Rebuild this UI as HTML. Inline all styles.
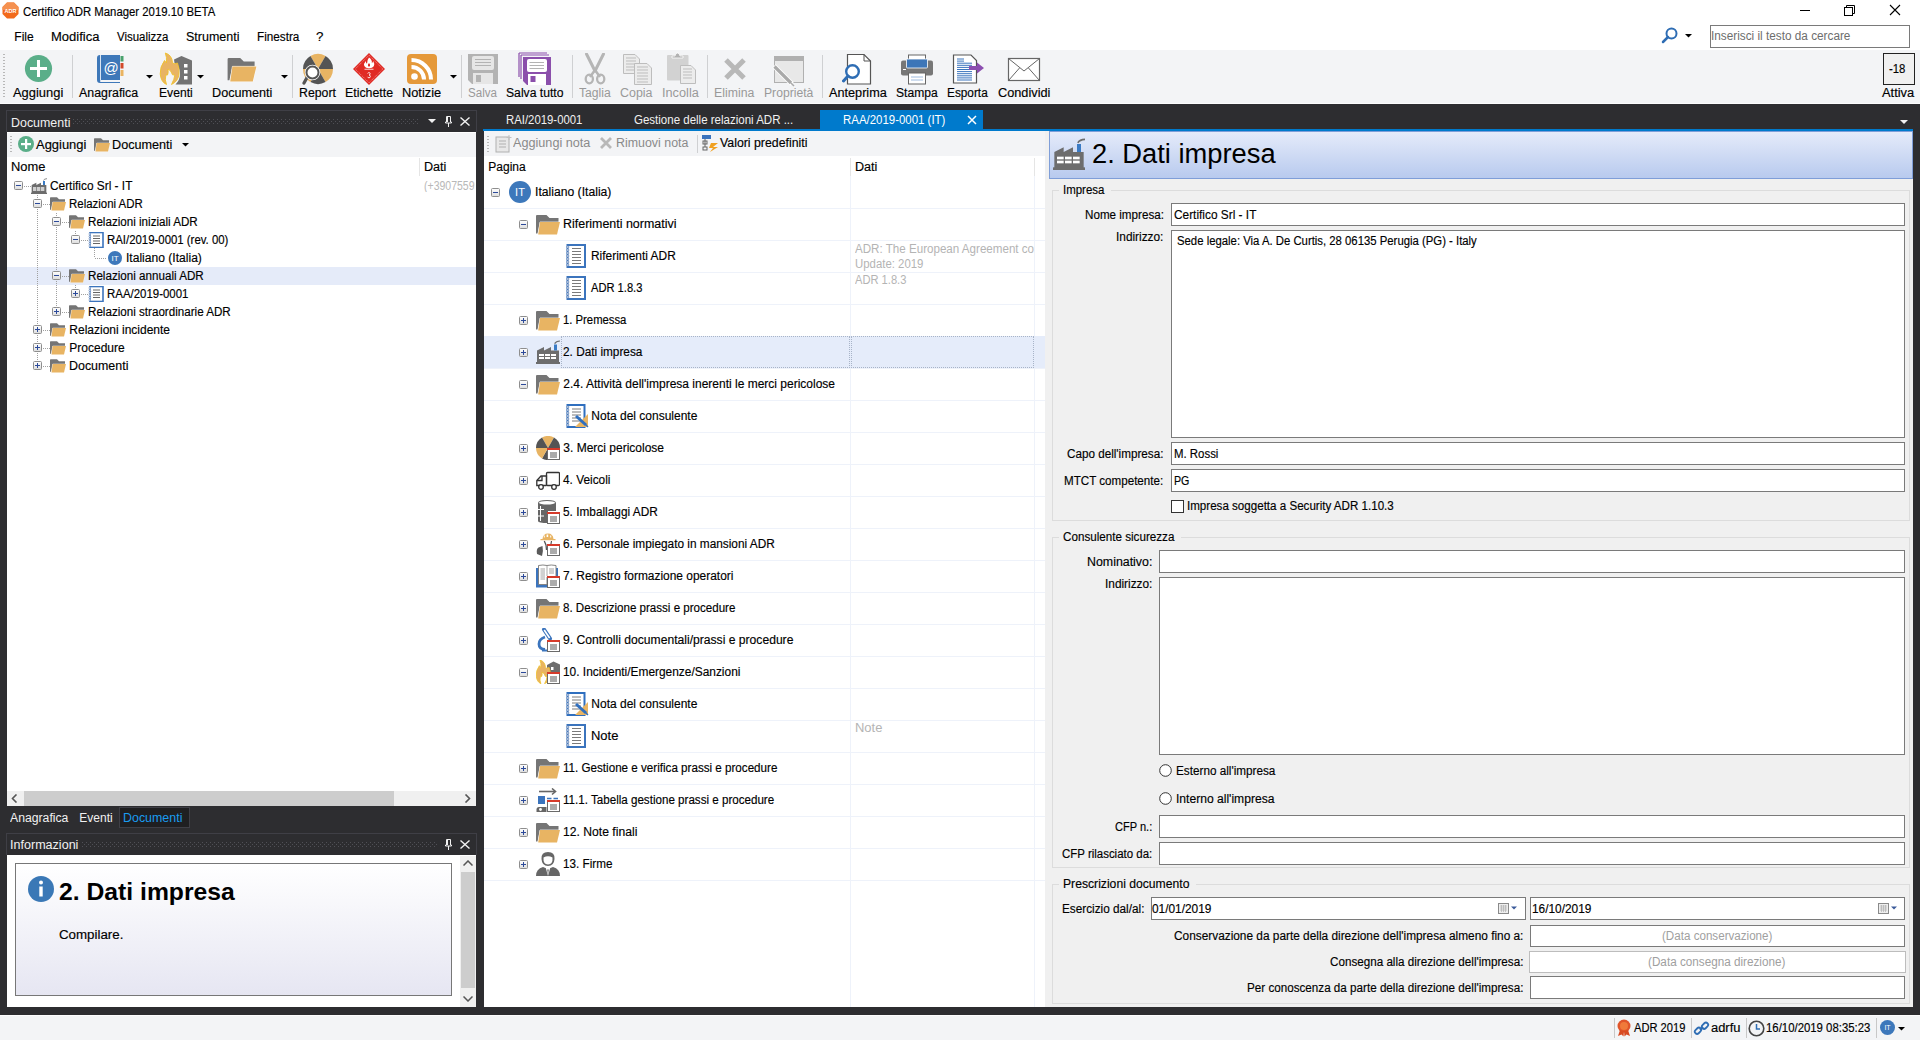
<!DOCTYPE html>
<html><head><meta charset="utf-8"><style>*{box-sizing:border-box}
html,body{margin:0;padding:0}
body{width:1920px;height:1040px;overflow:hidden;position:relative;background:#2d2d30;font-family:"Liberation Sans",sans-serif;font-size:12px;color:#000}
.a{position:absolute;display:block}
.t{position:absolute;white-space:nowrap}
.k{-webkit-text-stroke:0.15px currentColor}
</style></head><body>
<div class="a" style="left:0px;top:0px;width:1920px;height:50px;background:#ffffff;"></div>
<div class="a" style="left:0px;top:50px;width:1920px;height:53px;background:#f3f4f6;"></div>
<div class="a" style="left:0px;top:103px;width:1920px;height:1px;background:#fcfcfd;"></div>
<div class="a" style="left:0px;top:1015px;width:1920px;height:25px;background:#f3f4f6;"></div>
<div class="a" style="left:0px;top:1015px;width:1920px;height:1px;background:#fcfcfd;"></div>
<div class="a" style="left:6px;top:110px;width:471px;height:1px;background:#3f3f46;"></div>
<div class="a" style="left:6px;top:110px;width:1px;height:22px;background:#3f3f46;"></div>
<div class="a" style="left:476px;top:110px;width:1px;height:22px;background:#3f3f46;"></div>
<div class="a" style="left:7px;top:132px;width:469px;height:1px;background:#ffffff;"></div>
<div class="a" style="left:7px;top:133px;width:469px;height:24px;background:#f3f4f6;"></div>
<div class="a" style="left:7px;top:157px;width:469px;height:634px;background:#ffffff;"></div>
<div class="a" style="left:7px;top:791px;width:469px;height:15px;background:#f0f0f0;"></div>
<div class="a" style="left:119px;top:807px;width:71px;height:21px;background:#1f1f21;border:1px solid #3f3f46;"></div>
<div class="a" style="left:6px;top:833px;width:471px;height:1px;background:#3f3f46;"></div>
<div class="a" style="left:6px;top:833px;width:1px;height:22px;background:#3f3f46;"></div>
<div class="a" style="left:476px;top:833px;width:1px;height:22px;background:#3f3f46;"></div>
<div class="a" style="left:7px;top:855px;width:469px;height:152px;background:#ffffff;"></div>
<div class="a" style="left:820px;top:110px;width:163px;height:19px;background:#007acc;"></div>
<div class="a" style="left:483px;top:129px;width:1430px;height:2px;background:#007acc;"></div>
<div class="a" style="left:484px;top:131px;width:561px;height:25px;background:#f3f4f6;"></div>
<div class="a" style="left:484px;top:156px;width:561px;height:851px;background:#ffffff;"></div>
<div class="a" style="left:1045px;top:131px;width:868px;height:876px;background:#f0f0f0;"></div>
<div class="a" style="left:1049px;top:131px;width:864px;height:48px;background:linear-gradient(#e5ebfa,#b8caee);border:1px solid #7f9ed8;"></div>
<div class="a" style="left:3px;top:54px;width:2px;height:43px;background:repeating-linear-gradient(#b8b8b8 0 1px,transparent 1px 3px)"></div>
<svg class="a" style="left:24px;top:54px" width="29" height="29" viewBox="0 0 29 29"><circle cx="14.5" cy="14.5" r="13.6" fill="#5aae89"/><rect x="13" y="6" width="3" height="17" fill="#fff"/><rect x="6" y="13" width="17" height="3" fill="#fff"/></svg>
<div class="a" style="left:72px;top:55px;width:1px;height:43px;background:#cfd0d2;"></div>
<div class="a" style="left:292px;top:55px;width:1px;height:43px;background:#cfd0d2;"></div>
<div class="a" style="left:461px;top:55px;width:1px;height:43px;background:#cfd0d2;"></div>
<div class="a" style="left:572px;top:55px;width:1px;height:43px;background:#cfd0d2;"></div>
<div class="a" style="left:707px;top:55px;width:1px;height:43px;background:#cfd0d2;"></div>
<div class="a" style="left:822px;top:55px;width:1px;height:43px;background:#cfd0d2;"></div>
<svg class="a" style="left:97px;top:55px" width="27" height="29" viewBox="0 0 27 29"><path d="M3 0 H23 V25 H4 Q3 25 3 26 Q3 27 4 27 H23 V28 H3 Q0 28 0 25 V3 Q0 0 3 0 Z" fill="#3e78b9"/><rect x="3.2" y="0" width="0.8" height="25" fill="#fff"/><rect x="23.5" y="1" width="3" height="5.5" fill="#49a16d"/><rect x="23.5" y="8" width="3" height="5.5" fill="#d24a2a"/><rect x="23.5" y="15" width="3" height="6" fill="#eab360"/><text x="14" y="17.5" text-anchor="middle" font-family="Liberation Sans" font-size="15" fill="#fff">@</text></svg>
<svg class="a" style="left:146px;top:75px" width="7" height="4" viewBox="0 0 7 4"><path d="M0 0 H7 L3.5 3.6 Z" fill="#000"/></svg>
<svg class="a" style="left:156px;top:50px" width="40" height="38" viewBox="0 0 40 38"><path d="M18 9.5 L25.5 6 L36 10.5 V34.5 H19.5 Q24 30 24 24 Q24 16 18.5 13 Z" fill="#737373"/><rect x="28" y="14" width="3.5" height="3.5" fill="#fff"/><rect x="28" y="20" width="3.5" height="3.5" fill="#fff"/><rect x="28" y="26" width="3.5" height="3.5" fill="#fff"/><path d="M9.3 3 Q16 5 16.5 12.5 L18 13.8 Q20 13.5 21.5 13 Q23.5 18 23 24 Q22.5 31 15.5 34.5 Q18.5 29 18.8 25 L16.5 24.8 Q15 20 12 19 Q12.5 23 11.5 25 L9.8 25 Q8.5 30 10.5 34.5 Q5 32 4.2 24 Q3.8 17 8.5 10.5 L10.5 13 Q11 7 9.3 3 Z" fill="#e8b363" stroke="#efc12a" stroke-width="0.9"/></svg>
<svg class="a" style="left:197px;top:75px" width="7" height="4" viewBox="0 0 7 4"><path d="M0 0 H7 L3.5 3.6 Z" fill="#000"/></svg>
<svg class="a" style="left:227px;top:58px" width="30" height="24" viewBox="0 0 24 20"><path d="M0 1 Q0 0 1 0 H10.5 L13.5 3 H22.5 V7 H4 L1.5 18.5 H0 Z" fill="#757575"/><path d="M4 7 H24 L21 19.6 H2.2 Z" fill="#e8b463" stroke="#fff" stroke-width="0.7" paint-order="stroke"/></svg>
<svg class="a" style="left:281px;top:75px" width="7" height="4" viewBox="0 0 7 4"><path d="M0 0 H7 L3.5 3.6 Z" fill="#000"/></svg>
<svg class="a" style="left:302px;top:53px" width="32" height="32" viewBox="0 0 32 32"><path d="M16 16 L8.50 3.01 A15 15 0 0 1 23.50 3.01 Z" fill="#e8b463"/><path d="M16 16 L23.50 3.01 A15 15 0 0 1 31.00 16.00 Z" fill="#545454"/><path d="M16 16 L31.00 16.00 A15 15 0 0 1 23.50 28.99 Z" fill="#e8b463"/><path d="M16 16 L23.50 28.99 A15 15 0 0 1 8.50 28.99 Z" fill="#545454"/><path d="M16 16 L8.50 28.99 A15 15 0 0 1 1.00 16.00 Z" fill="#e8b463"/><path d="M16 16 L1.00 16.00 A15 15 0 0 1 8.50 3.01 Z" fill="#545454"/><path d="M7 21 L2 30" stroke="#555" stroke-width="3.2" stroke-linecap="round"/><circle cx="10.5" cy="19.5" r="6.5" fill="#fff" stroke="#fff" stroke-width="2.5"/><circle cx="10.5" cy="19.5" r="6" fill="#fff" stroke="#555" stroke-width="2"/></svg>
<svg class="a" style="left:352px;top:52px" width="34" height="34" viewBox="0 0 34 34"><path d="M17 1 L33 17 L17 33 L1 17 Z" fill="#e02a24"/><path d="M17 3.2 L30.8 17 L17 30.8 L3.2 17 Z" fill="none" stroke="#fff" stroke-width="0.5" stroke-dasharray="1 1"/><path d="M17 5.5 Q20.5 8 19.8 11 Q21 10.3 21.2 9 Q23 12 21.8 14.3 Q20.5 16.2 17 16.2 Q13.5 16.2 12.3 14 Q11.5 11.5 13.8 9 Q13.8 11 15 11.8 Q14.8 8.3 17 5.5 Z" fill="#fff"/><path d="M17 11 Q18.5 12.5 18 14 Q17 15 16 14 Q15.5 12.5 17 11 Z" fill="#e02a24"/><rect x="12.5" y="16.8" width="9" height="0.8" fill="#fff"/><path d="M15.6 21.5 Q16 20.6 17 20.6 Q18.2 20.6 18.2 21.8 Q18.2 22.8 17 23 Q18.4 23.2 18.4 24.4 Q18.4 25.8 17 25.8 Q15.8 25.8 15.5 24.8" fill="none" stroke="#fff" stroke-width="0.8"/></svg>
<svg class="a" style="left:407px;top:54px" width="30" height="30" viewBox="0 0 30 30"><rect x="0" y="0" width="30" height="30" rx="4" fill="#e5993a"/><circle cx="7.5" cy="22.5" r="3.3" fill="#fff"/><path d="M4.5 13 A12.5 12.5 0 0 1 17 25.5" stroke="#fff" stroke-width="4" fill="none"/><path d="M4.5 6 A19.5 19.5 0 0 1 24 25.5" stroke="#fff" stroke-width="4" fill="none"/></svg>
<svg class="a" style="left:450px;top:75px" width="7" height="4" viewBox="0 0 7 4"><path d="M0 0 H7 L3.5 3.6 Z" fill="#000"/></svg>
<svg class="a" style="left:468px;top:54px" width="30" height="30" viewBox="0 0 30 30"><path d="M0 0 H30 V30 H4 L0 26 Z" fill="#b3b3b3"/><rect x="4" y="2" width="22" height="14" rx="2" fill="#e6e6e6"/><path d="M7 5.5 H23 M7 8.5 H23 M7 11.5 H23" stroke="#b3b3b3" stroke-width="1"/><rect x="5" y="19" width="20" height="11" fill="#e6e6e6"/><rect x="8" y="21" width="5" height="7" fill="#b3b3b3"/></svg>
<svg class="a" style="left:518px;top:52px" width="34" height="34" viewBox="0 0 34 34"><path d="M1 1 H29 M1 1 V25" stroke="#8b4fab" stroke-width="1.2" fill="none"/><path d="M3 3 H31 M3 3 V27" stroke="#8b4fab" stroke-width="1.2" fill="none"/><path d="M5 5 H33 V33 H9 L5 29 Z" fill="#8b4fab"/><rect x="9" y="7" width="20" height="13" rx="2" fill="#fff"/><path d="M11.5 10.5 H26 M11.5 13.5 H26 M11.5 16.5 H26" stroke="#b3b3b3" stroke-width="1"/><rect x="10" y="22" width="18" height="11" fill="#fff"/><rect x="12.5" y="24" width="5" height="6" fill="#8b4fab"/></svg>
<svg class="a" style="left:584px;top:53px" width="22" height="32" viewBox="0 0 22 32"><path d="M2.5 1 L11 18 M19.5 1 L11 18" stroke="#b5b5b5" stroke-width="3" stroke-linecap="round"/><path d="M11 17 L6 24 M11 17 L16 24" stroke="#b5b5b5" stroke-width="2.5"/><ellipse cx="5.3" cy="26" rx="3.6" ry="4.3" fill="none" stroke="#b5b5b5" stroke-width="2.3"/><ellipse cx="16.7" cy="26" rx="3.6" ry="4.3" fill="none" stroke="#b5b5b5" stroke-width="2.3"/></svg>
<svg class="a" style="left:622px;top:53px" width="30" height="32" viewBox="0 0 30 32"><path d="M1.5 1.5 H13 L17.5 6 V20.5 H1.5 Z" fill="#ececec" stroke="#bdbdbd" stroke-width="1"/><path d="M4 5 H14" stroke="#bdbdbd" stroke-width="1"/><path d="M4 8 H14" stroke="#bdbdbd" stroke-width="1"/><path d="M4 11 H14" stroke="#bdbdbd" stroke-width="1"/><path d="M4 14 H14" stroke="#bdbdbd" stroke-width="1"/><path d="M4 17 H14" stroke="#bdbdbd" stroke-width="1"/><path d="M12.5 10.5 H25 L29.5 15 V31.5 H12.5 Z" fill="#ececec" stroke="#bdbdbd" stroke-width="1"/><path d="M15 14 H26" stroke="#bdbdbd" stroke-width="1"/><path d="M15 17 H26" stroke="#bdbdbd" stroke-width="1"/><path d="M15 20 H26" stroke="#bdbdbd" stroke-width="1"/><path d="M15 23 H26" stroke="#bdbdbd" stroke-width="1"/><path d="M15 26 H26" stroke="#bdbdbd" stroke-width="1"/><path d="M15 29 H26" stroke="#bdbdbd" stroke-width="1"/></svg>
<svg class="a" style="left:666px;top:52px" width="31" height="33" viewBox="0 0 31 33"><rect x="1" y="3" width="21.5" height="25.5" rx="1" fill="#d2d2d2"/><path d="M6 6 H17 V4 H14 Q13.5 1 11.5 1 Q9.5 1 9 4 H6 Z" fill="#b2b2b2" stroke="#fff" stroke-width="0.8"/><path d="M14.5 13.5 H25 L29.5 18 V31.5 H14.5 Z" fill="#ececec" stroke="#bdbdbd" stroke-width="1"/><path d="M17 17 H26" stroke="#bdbdbd" stroke-width="1"/><path d="M17 20 H26" stroke="#bdbdbd" stroke-width="1"/><path d="M17 23 H26" stroke="#bdbdbd" stroke-width="1"/><path d="M17 26 H26" stroke="#bdbdbd" stroke-width="1"/></svg>
<svg class="a" style="left:723px;top:57px" width="24" height="24" viewBox="0 0 24 24"><path d="M3 3 L21 21 M21 3 L3 21" stroke="#b8b8b8" stroke-width="5"/></svg>
<svg class="a" style="left:772px;top:55px" width="34" height="32" viewBox="0 0 34 32"><rect x="2.5" y="1.5" width="29" height="26" fill="#e8e8e8" stroke="#b0b0b0" stroke-width="1"/><rect x="2" y="1" width="30" height="5" fill="#b0b0b0"/><path d="M2 11 L20 29" stroke="#fff" stroke-width="5"/><path d="M2.5 11.5 L19 28" stroke="#a9a9a9" stroke-width="3.2"/><path d="M19 28 L22 31" stroke="#a9a9a9" stroke-width="1.5"/></svg>
<svg class="a" style="left:842px;top:53px" width="30" height="32" viewBox="0 0 30 32"><path d="M5.5 1.5 H22 L28.5 8 V31 H5.5 Z" fill="#fff" stroke="#555" stroke-width="1.2"/><path d="M22 1.5 V8 H28.5" fill="none" stroke="#555" stroke-width="1"/><circle cx="10.5" cy="18.5" r="6.3" fill="#fff" stroke="#2e6db4" stroke-width="2.4"/><path d="M6 23 L1.5 28" stroke="#2e6db4" stroke-width="3" stroke-linecap="round"/></svg>
<svg class="a" style="left:900px;top:54px" width="34" height="31" viewBox="0 0 34 31"><rect x="8.5" y="1" width="17" height="7" fill="#fff" stroke="#666" stroke-width="1"/><rect x="1" y="6.5" width="32" height="15" rx="2" fill="#777"/><rect x="6.5" y="5" width="21" height="9" rx="1" fill="#3d76b8" stroke="#fff" stroke-width="0.8"/><rect x="3" y="15" width="3" height="1" fill="#fff"/><rect x="8.5" y="19" width="17" height="11" fill="#fff" stroke="#666" stroke-width="1"/><path d="M11 23 H23 M11 26 H23" stroke="#9fbce0" stroke-width="1"/></svg>
<svg class="a" style="left:952px;top:54px" width="34" height="30" viewBox="0 0 34 30"><path d="M1.5 1 H19 L24.5 6.5 V29 H1.5 Z" fill="#fff" stroke="#555" stroke-width="1.2"/><path d="M5 5.0 H12" stroke="#3b74bd" stroke-width="1"/><path d="M5 7.1 H12" stroke="#3b74bd" stroke-width="1"/><path d="M5 9.2 H20" stroke="#3b74bd" stroke-width="1"/><path d="M5 11.3 H20" stroke="#3b74bd" stroke-width="1"/><path d="M5 13.4 H20" stroke="#3b74bd" stroke-width="1"/><path d="M5 15.5 H20" stroke="#3b74bd" stroke-width="1"/><path d="M5 17.6 H20" stroke="#3b74bd" stroke-width="1"/><path d="M5 19.700000000000003 H20" stroke="#3b74bd" stroke-width="1"/><path d="M5 21.8 H20" stroke="#3b74bd" stroke-width="1"/><path d="M5 23.900000000000002 H20" stroke="#3b74bd" stroke-width="1"/><path d="M5 26.0 H20" stroke="#3b74bd" stroke-width="1"/><path d="M17 12 H25 V8.5 L32 14 L25 19.5 V16 H17 Z" fill="#8c4eb0"/></svg>
<svg class="a" style="left:1007px;top:57px" width="34" height="25" viewBox="0 0 34 25"><rect x="1.5" y="1.5" width="31" height="22" fill="#fff" stroke="#666" stroke-width="1.2"/><path d="M1.5 1.5 L17 14 L32.5 1.5 M1.5 23.5 L12.5 11 M32.5 23.5 L21.5 11" stroke="#666" stroke-width="1" fill="none"/></svg>
<div class="a" style="left:1883px;top:53px;width:32px;height:32px;background:#f0f0f0;border:1px solid #222;"></div>
<div class="a" style="left:1800px;top:10px;width:10px;height:1px;background:#000;"></div>
<svg class="a" style="left:1844px;top:5px" width="11" height="11" viewBox="0 0 11 11"><rect x="0.5" y="2.5" width="8" height="8" fill="none" stroke="#000"/><path d="M2.5 2.5 V0.5 H10.5 V8.5 H8.5" fill="none" stroke="#000"/></svg>
<svg class="a" style="left:1889px;top:4px" width="12" height="12" viewBox="0 0 12 12"><path d="M1 1 L11 11 M11 1 L1 11" stroke="#000" stroke-width="1.1"/></svg>
<svg class="a" style="left:1661px;top:27px" width="18" height="17" viewBox="0 0 18 17"><circle cx="10.5" cy="6.5" r="5" fill="none" stroke="#2e6db4" stroke-width="2"/><path d="M7 10 L2 15" stroke="#2e6db4" stroke-width="2.5" stroke-linecap="round"/></svg>
<svg class="a" style="left:1685px;top:34px" width="7" height="4" viewBox="0 0 7 4"><path d="M0 0 H7 L3.5 3.6 Z" fill="#000"/></svg>
<div class="a" style="left:1710px;top:25px;width:200px;height:23px;background:#fff;border:1px solid #7a7a7a;"></div>
<svg class="a" style="left:2px;top:2px" width="17" height="17" viewBox="0 0 17 17"><path d="M5 0.5 H12 L16.5 5 V12 L12 16.5 H5 L0.5 12 V5 Z" fill="#f26a1b"/><path d="M5 0.5 H12 L16.5 5 V8 H0.5 V5 Z" fill="#f59150"/><text x="8.5" y="11" text-anchor="middle" font-family="Liberation Sans" font-weight="bold" font-size="5.5" fill="#fff">ADR</text></svg>
<svg width="0" height="0" style="position:absolute"><defs><linearGradient id="ebg" x1="0" y1="0" x2="0" y2="1"><stop offset="0" stop-color="#ffffff"/><stop offset="1" stop-color="#dcdcdc"/></linearGradient><pattern id="grip" x="0" y="0" width="4" height="4" patternUnits="userSpaceOnUse"><rect x="0" y="0" width="1" height="1" fill="#505056"/><rect x="2" y="2" width="1" height="1" fill="#505056"/></pattern></defs></svg>
<svg class="a" style="left:73px;top:119px" width="346" height="5" viewBox="0 0 346 5"><rect width="346" height="5" fill="url(#grip)"/></svg>
<svg class="a" style="left:428px;top:119px" width="8" height="4" viewBox="0 0 8 4"><path d="M0 0 H8 L4 4 Z" fill="#f1f1f1"/></svg>
<svg class="a" style="left:445px;top:116px" width="7" height="11" viewBox="0 0 7 11"><path d="M1.5 0.5 H5.5 V6 H6.5 V7 H0.5 V6 H1.5 Z" fill="none" stroke="#f1f1f1" stroke-width="1"/><path d="M2.5 1 V6" stroke="#f1f1f1"/><path d="M3.5 7 V11" stroke="#f1f1f1"/></svg>
<svg class="a" style="left:460px;top:117px" width="10" height="9" viewBox="0 0 10 9"><path d="M0.5 0.5 L9.5 8.5 M9.5 0.5 L0.5 8.5" stroke="#f1f1f1" stroke-width="1.4"/></svg>
<svg class="a" style="left:82px;top:842px" width="355" height="5" viewBox="0 0 355 5"><rect width="355" height="5" fill="url(#grip)"/></svg>
<svg class="a" style="left:445px;top:839px" width="7" height="11" viewBox="0 0 7 11"><path d="M1.5 0.5 H5.5 V6 H6.5 V7 H0.5 V6 H1.5 Z" fill="none" stroke="#f1f1f1" stroke-width="1"/><path d="M2.5 1 V6" stroke="#f1f1f1"/><path d="M3.5 7 V11" stroke="#f1f1f1"/></svg>
<svg class="a" style="left:460px;top:840px" width="10" height="9" viewBox="0 0 10 9"><path d="M0.5 0.5 L9.5 8.5 M9.5 0.5 L0.5 8.5" stroke="#f1f1f1" stroke-width="1.4"/></svg>
<div class="a" style="left:10px;top:136px;width:2px;height:17px;background:repeating-linear-gradient(#b8b8b8 0 1px,transparent 1px 3px)"></div>
<svg class="a" style="left:18px;top:136px" width="16" height="16" viewBox="0 0 16 16"><circle cx="8" cy="8" r="8" fill="#5aae89"/><rect x="7" y="3" width="2.2" height="10" fill="#fff"/><rect x="3" y="7" width="10" height="2.2" fill="#fff"/></svg>
<svg class="a" style="left:94px;top:138px" width="16" height="14" viewBox="0 0 24 20"><path d="M0 1 Q0 0 1 0 H10.5 L13.5 3 H22.5 V7 H4 L1.5 18.5 H0 Z" fill="#757575"/><path d="M4 7 H24 L21 19.6 H2.2 Z" fill="#e8b463" stroke="#fff" stroke-width="0.7" paint-order="stroke"/></svg>
<svg class="a" style="left:182px;top:143px" width="7" height="4" viewBox="0 0 7 4"><path d="M0 0 H7 L3.5 3.6 Z" fill="#000"/></svg>
<div class="a" style="left:419px;top:158px;width:1px;height:18px;background:#e5e5e5;"></div>
<div class="a" style="left:7px;top:267px;width:469px;height:18px;background:#e5ebf9;"></div>
<div class="a" style="left:37px;top:195px;width:1px;height:171px;background:repeating-linear-gradient(#a0a0a0 0 1px,transparent 1px 2px)"></div>
<div class="a" style="left:56px;top:213px;width:1px;height:99px;background:repeating-linear-gradient(#a0a0a0 0 1px,transparent 1px 2px)"></div>
<div class="a" style="left:75px;top:231px;width:1px;height:9px;background:repeating-linear-gradient(#a0a0a0 0 1px,transparent 1px 2px)"></div>
<div class="a" style="left:94px;top:248px;width:1px;height:10px;background:repeating-linear-gradient(#a0a0a0 0 1px,transparent 1px 2px)"></div>
<div class="a" style="left:75px;top:285px;width:1px;height:9px;background:repeating-linear-gradient(#a0a0a0 0 1px,transparent 1px 2px)"></div>
<svg class="a" style="left:14px;top:181px" width="9" height="9" viewBox="0 0 9 9"><rect x="0.5" y="0.5" width="8" height="8" rx="1" fill="url(#ebg)" stroke="#8e8e8e"/><path d="M2 4.5 H7" stroke="#2c4a9a" stroke-width="1"/></svg>
<div class="a" style="left:24px;top:186px;width:7px;height:1px;background:repeating-linear-gradient(90deg,#a0a0a0 0 1px,transparent 1px 2px)"></div>
<svg class="a" style="left:31px;top:178px" width="16" height="16" viewBox="0 0 24 24"><path d="M1 23 V10.5 L8 7 V10.5 L15 7 V10.5 H23 V23 Z" fill="#6d6d6d"/><rect x="0" y="22" width="24" height="2" fill="#6d6d6d"/><rect x="18" y="4.5" width="3" height="6" fill="#3b7bc4"/><path d="M18.6 3.6 Q20 1.2 24 1" stroke="#6d6d6d" stroke-width="1.2" fill="none"/><rect x="3" y="14" width="5" height="2" fill="#fff"/><rect x="3" y="17" width="5" height="2" fill="#fff"/><rect x="9" y="14" width="5" height="2" fill="#fff"/><rect x="9" y="17" width="5" height="2" fill="#fff"/><rect x="15" y="14" width="5" height="2" fill="#fff"/><rect x="15" y="17" width="5" height="2" fill="#fff"/></svg>
<svg class="a" style="left:33px;top:199px" width="9" height="9" viewBox="0 0 9 9"><rect x="0.5" y="0.5" width="8" height="8" rx="1" fill="url(#ebg)" stroke="#8e8e8e"/><path d="M2 4.5 H7" stroke="#2c4a9a" stroke-width="1"/></svg>
<div class="a" style="left:43px;top:204px;width:7px;height:1px;background:repeating-linear-gradient(90deg,#a0a0a0 0 1px,transparent 1px 2px)"></div>
<svg class="a" style="left:50px;top:197px" width="16" height="14" viewBox="0 0 24 20"><path d="M0 1 Q0 0 1 0 H10.5 L13.5 3 H22.5 V7 H4 L1.5 18.5 H0 Z" fill="#757575"/><path d="M4 7 H24 L21 19.6 H2.2 Z" fill="#e8b463" stroke="#fff" stroke-width="0.7" paint-order="stroke"/></svg>
<svg class="a" style="left:52px;top:217px" width="9" height="9" viewBox="0 0 9 9"><rect x="0.5" y="0.5" width="8" height="8" rx="1" fill="url(#ebg)" stroke="#8e8e8e"/><path d="M2 4.5 H7" stroke="#2c4a9a" stroke-width="1"/></svg>
<div class="a" style="left:62px;top:222px;width:7px;height:1px;background:repeating-linear-gradient(90deg,#a0a0a0 0 1px,transparent 1px 2px)"></div>
<svg class="a" style="left:69px;top:215px" width="16" height="14" viewBox="0 0 24 20"><path d="M0 1 Q0 0 1 0 H10.5 L13.5 3 H22.5 V7 H4 L1.5 18.5 H0 Z" fill="#757575"/><path d="M4 7 H24 L21 19.6 H2.2 Z" fill="#e8b463" stroke="#fff" stroke-width="0.7" paint-order="stroke"/></svg>
<svg class="a" style="left:71px;top:235px" width="9" height="9" viewBox="0 0 9 9"><rect x="0.5" y="0.5" width="8" height="8" rx="1" fill="url(#ebg)" stroke="#8e8e8e"/><path d="M2 4.5 H7" stroke="#2c4a9a" stroke-width="1"/></svg>
<div class="a" style="left:81px;top:240px;width:7px;height:1px;background:repeating-linear-gradient(90deg,#a0a0a0 0 1px,transparent 1px 2px)"></div>
<svg class="a" style="left:88px;top:232px" width="16" height="16" viewBox="0 0 16 16"><rect x="2" y="0.5" width="13" height="15" fill="#fff" stroke="#3b74bd" stroke-width="1.6"/><path d="M5 4 H12 M5 6.5 H12 M5 9 H12 M5 11.5 H12" stroke="#666" stroke-width="1"/><circle cx="1.8" cy="2.0" r="0.9" fill="#fff" stroke="#6a8cc0" stroke-width="0.6"/><circle cx="1.8" cy="4.4" r="0.9" fill="#fff" stroke="#6a8cc0" stroke-width="0.6"/><circle cx="1.8" cy="6.8" r="0.9" fill="#fff" stroke="#6a8cc0" stroke-width="0.6"/><circle cx="1.8" cy="9.2" r="0.9" fill="#fff" stroke="#6a8cc0" stroke-width="0.6"/><circle cx="1.8" cy="11.6" r="0.9" fill="#fff" stroke="#6a8cc0" stroke-width="0.6"/><circle cx="1.8" cy="14.0" r="0.9" fill="#fff" stroke="#6a8cc0" stroke-width="0.6"/></svg>
<div class="a" style="left:95px;top:258px;width:12px;height:1px;background:repeating-linear-gradient(90deg,#a0a0a0 0 1px,transparent 1px 2px)"></div>
<svg class="a" style="left:108px;top:251px" width="14" height="14" viewBox="0 0 14 14"><circle cx="7.0" cy="7.0" r="7.0" fill="#3d78bb"/><text x="7.0" y="9.879999999999999" text-anchor="middle" font-family="Liberation Sans" font-size="8" fill="#fff">IT</text></svg>
<svg class="a" style="left:52px;top:271px" width="9" height="9" viewBox="0 0 9 9"><rect x="0.5" y="0.5" width="8" height="8" rx="1" fill="url(#ebg)" stroke="#8e8e8e"/><path d="M2 4.5 H7" stroke="#2c4a9a" stroke-width="1"/></svg>
<div class="a" style="left:62px;top:276px;width:7px;height:1px;background:repeating-linear-gradient(90deg,#a0a0a0 0 1px,transparent 1px 2px)"></div>
<svg class="a" style="left:69px;top:269px" width="16" height="14" viewBox="0 0 24 20"><path d="M0 1 Q0 0 1 0 H10.5 L13.5 3 H22.5 V7 H4 L1.5 18.5 H0 Z" fill="#757575"/><path d="M4 7 H24 L21 19.6 H2.2 Z" fill="#e8b463" stroke="#fff" stroke-width="0.7" paint-order="stroke"/></svg>
<svg class="a" style="left:71px;top:289px" width="9" height="9" viewBox="0 0 9 9"><rect x="0.5" y="0.5" width="8" height="8" rx="1" fill="url(#ebg)" stroke="#8e8e8e"/><path d="M2 4.5 H7" stroke="#2c4a9a" stroke-width="1"/><path d="M4.5 2 V7" stroke="#2c4a9a" stroke-width="1"/></svg>
<div class="a" style="left:81px;top:294px;width:7px;height:1px;background:repeating-linear-gradient(90deg,#a0a0a0 0 1px,transparent 1px 2px)"></div>
<svg class="a" style="left:88px;top:286px" width="16" height="16" viewBox="0 0 16 16"><rect x="2" y="0.5" width="13" height="15" fill="#fff" stroke="#3b74bd" stroke-width="1.6"/><path d="M5 4 H12 M5 6.5 H12 M5 9 H12 M5 11.5 H12" stroke="#666" stroke-width="1"/><circle cx="1.8" cy="2.0" r="0.9" fill="#fff" stroke="#6a8cc0" stroke-width="0.6"/><circle cx="1.8" cy="4.4" r="0.9" fill="#fff" stroke="#6a8cc0" stroke-width="0.6"/><circle cx="1.8" cy="6.8" r="0.9" fill="#fff" stroke="#6a8cc0" stroke-width="0.6"/><circle cx="1.8" cy="9.2" r="0.9" fill="#fff" stroke="#6a8cc0" stroke-width="0.6"/><circle cx="1.8" cy="11.6" r="0.9" fill="#fff" stroke="#6a8cc0" stroke-width="0.6"/><circle cx="1.8" cy="14.0" r="0.9" fill="#fff" stroke="#6a8cc0" stroke-width="0.6"/></svg>
<svg class="a" style="left:52px;top:307px" width="9" height="9" viewBox="0 0 9 9"><rect x="0.5" y="0.5" width="8" height="8" rx="1" fill="url(#ebg)" stroke="#8e8e8e"/><path d="M2 4.5 H7" stroke="#2c4a9a" stroke-width="1"/><path d="M4.5 2 V7" stroke="#2c4a9a" stroke-width="1"/></svg>
<div class="a" style="left:62px;top:312px;width:7px;height:1px;background:repeating-linear-gradient(90deg,#a0a0a0 0 1px,transparent 1px 2px)"></div>
<svg class="a" style="left:69px;top:305px" width="16" height="14" viewBox="0 0 24 20"><path d="M0 1 Q0 0 1 0 H10.5 L13.5 3 H22.5 V7 H4 L1.5 18.5 H0 Z" fill="#757575"/><path d="M4 7 H24 L21 19.6 H2.2 Z" fill="#e8b463" stroke="#fff" stroke-width="0.7" paint-order="stroke"/></svg>
<svg class="a" style="left:33px;top:325px" width="9" height="9" viewBox="0 0 9 9"><rect x="0.5" y="0.5" width="8" height="8" rx="1" fill="url(#ebg)" stroke="#8e8e8e"/><path d="M2 4.5 H7" stroke="#2c4a9a" stroke-width="1"/><path d="M4.5 2 V7" stroke="#2c4a9a" stroke-width="1"/></svg>
<div class="a" style="left:43px;top:330px;width:7px;height:1px;background:repeating-linear-gradient(90deg,#a0a0a0 0 1px,transparent 1px 2px)"></div>
<svg class="a" style="left:50px;top:323px" width="16" height="14" viewBox="0 0 24 20"><path d="M0 1 Q0 0 1 0 H10.5 L13.5 3 H22.5 V7 H4 L1.5 18.5 H0 Z" fill="#757575"/><path d="M4 7 H24 L21 19.6 H2.2 Z" fill="#e8b463" stroke="#fff" stroke-width="0.7" paint-order="stroke"/></svg>
<svg class="a" style="left:33px;top:343px" width="9" height="9" viewBox="0 0 9 9"><rect x="0.5" y="0.5" width="8" height="8" rx="1" fill="url(#ebg)" stroke="#8e8e8e"/><path d="M2 4.5 H7" stroke="#2c4a9a" stroke-width="1"/><path d="M4.5 2 V7" stroke="#2c4a9a" stroke-width="1"/></svg>
<div class="a" style="left:43px;top:348px;width:7px;height:1px;background:repeating-linear-gradient(90deg,#a0a0a0 0 1px,transparent 1px 2px)"></div>
<svg class="a" style="left:50px;top:341px" width="16" height="14" viewBox="0 0 24 20"><path d="M0 1 Q0 0 1 0 H10.5 L13.5 3 H22.5 V7 H4 L1.5 18.5 H0 Z" fill="#757575"/><path d="M4 7 H24 L21 19.6 H2.2 Z" fill="#e8b463" stroke="#fff" stroke-width="0.7" paint-order="stroke"/></svg>
<svg class="a" style="left:33px;top:361px" width="9" height="9" viewBox="0 0 9 9"><rect x="0.5" y="0.5" width="8" height="8" rx="1" fill="url(#ebg)" stroke="#8e8e8e"/><path d="M2 4.5 H7" stroke="#2c4a9a" stroke-width="1"/><path d="M4.5 2 V7" stroke="#2c4a9a" stroke-width="1"/></svg>
<div class="a" style="left:43px;top:366px;width:7px;height:1px;background:repeating-linear-gradient(90deg,#a0a0a0 0 1px,transparent 1px 2px)"></div>
<svg class="a" style="left:50px;top:359px" width="16" height="14" viewBox="0 0 24 20"><path d="M0 1 Q0 0 1 0 H10.5 L13.5 3 H22.5 V7 H4 L1.5 18.5 H0 Z" fill="#757575"/><path d="M4 7 H24 L21 19.6 H2.2 Z" fill="#e8b463" stroke="#fff" stroke-width="0.7" paint-order="stroke"/></svg>
<svg class="a" style="left:11px;top:794px" width="7" height="9" viewBox="0 0 7 9"><path d="M5.5 0.5 L1.5 4.5 L5.5 8.5" fill="none" stroke="#555" stroke-width="1.6"/></svg>
<div class="a" style="left:24px;top:791px;width:370px;height:15px;background:#cdcdcd;"></div>
<svg class="a" style="left:464px;top:794px" width="7" height="9" viewBox="0 0 7 9"><path d="M1.5 0.5 L5.5 4.5 L1.5 8.5" fill="none" stroke="#555" stroke-width="1.6"/></svg>
<div class="a" style="left:487px;top:136px;width:2px;height:17px;background:repeating-linear-gradient(#b8b8b8 0 1px,transparent 1px 3px)"></div>
<svg class="a" style="left:495px;top:135px" width="17" height="18" viewBox="0 0 17 18"><rect x="1" y="2" width="13" height="15" fill="#e8e8e8" stroke="#b0b0b0"/><path d="M4 6 H11 M4 9 H11 M4 12 H11" stroke="#b0b0b0"/><path d="M14 0 V5 M11.5 2.5 H16.5" stroke="#c0c0c0"/></svg>
<svg class="a" style="left:599px;top:136px" width="14" height="14" viewBox="0 0 14 14"><path d="M2 2 L12 12 M12 2 L2 12" stroke="#b8b8b8" stroke-width="2.8"/></svg>
<div class="a" style="left:697px;top:135px;width:1px;height:18px;background:#cfd0d2;"></div>
<svg class="a" style="left:702px;top:135px" width="17" height="17" viewBox="0 0 17 17"><rect x="0" y="0" width="9" height="4" fill="#3b74bd"/><rect x="1" y="6" width="4" height="3" fill="none" stroke="#666"/><rect x="1" y="12" width="4" height="3" fill="none" stroke="#666"/><path d="M3 4 V12" stroke="#666"/><path d="M9 8 L16 8 L11 12 L16 12 L8 17 L11 13 L7 13 Z" fill="#f0a020"/></svg>
<div class="a" style="left:850px;top:158px;width:1px;height:18px;background:#e5e5e5;"></div>
<div class="a" style="left:1034px;top:158px;width:1px;height:18px;background:#e5e5e5;"></div>
<div class="a" style="left:850px;top:176px;width:1px;height:831px;background:#eef2fa;"></div>
<div class="a" style="left:1034px;top:176px;width:1px;height:831px;background:#eef2fa;"></div>
<div class="a" style="left:484px;top:208px;width:561px;height:1px;background:#eef2fa;"></div>
<div class="a" style="left:484px;top:240px;width:561px;height:1px;background:#eef2fa;"></div>
<div class="a" style="left:484px;top:272px;width:561px;height:1px;background:#eef2fa;"></div>
<div class="a" style="left:484px;top:304px;width:561px;height:1px;background:#eef2fa;"></div>
<div class="a" style="left:484px;top:336px;width:561px;height:1px;background:#eef2fa;"></div>
<div class="a" style="left:484px;top:368px;width:561px;height:1px;background:#eef2fa;"></div>
<div class="a" style="left:484px;top:400px;width:561px;height:1px;background:#eef2fa;"></div>
<div class="a" style="left:484px;top:432px;width:561px;height:1px;background:#eef2fa;"></div>
<div class="a" style="left:484px;top:464px;width:561px;height:1px;background:#eef2fa;"></div>
<div class="a" style="left:484px;top:496px;width:561px;height:1px;background:#eef2fa;"></div>
<div class="a" style="left:484px;top:528px;width:561px;height:1px;background:#eef2fa;"></div>
<div class="a" style="left:484px;top:560px;width:561px;height:1px;background:#eef2fa;"></div>
<div class="a" style="left:484px;top:592px;width:561px;height:1px;background:#eef2fa;"></div>
<div class="a" style="left:484px;top:624px;width:561px;height:1px;background:#eef2fa;"></div>
<div class="a" style="left:484px;top:656px;width:561px;height:1px;background:#eef2fa;"></div>
<div class="a" style="left:484px;top:688px;width:561px;height:1px;background:#eef2fa;"></div>
<div class="a" style="left:484px;top:720px;width:561px;height:1px;background:#eef2fa;"></div>
<div class="a" style="left:484px;top:752px;width:561px;height:1px;background:#eef2fa;"></div>
<div class="a" style="left:484px;top:784px;width:561px;height:1px;background:#eef2fa;"></div>
<div class="a" style="left:484px;top:816px;width:561px;height:1px;background:#eef2fa;"></div>
<div class="a" style="left:484px;top:848px;width:561px;height:1px;background:#eef2fa;"></div>
<div class="a" style="left:484px;top:880px;width:561px;height:1px;background:#eef2fa;"></div>
<div class="a" style="left:484px;top:336px;width:561px;height:32px;background:#e5ecfa;"></div>
<div class="a" style="left:561px;top:336px;width:289px;height:32px;border:1px dotted #a8b4c8"></div>
<div class="a" style="left:851px;top:336px;width:183px;height:32px;border:1px dotted #a8b4c8"></div>
<svg class="a" style="left:491px;top:188px" width="9" height="9" viewBox="0 0 9 9"><rect x="0.5" y="0.5" width="8" height="8" rx="1" fill="url(#ebg)" stroke="#8e8e8e"/><path d="M2 4.5 H7" stroke="#2c4a9a" stroke-width="1"/></svg>
<svg class="a" style="left:509px;top:181px" width="22" height="22" viewBox="0 0 22 22"><circle cx="11.0" cy="11.0" r="11.0" fill="#3d78bb"/><text x="11.0" y="14.96" text-anchor="middle" font-family="Liberation Sans" font-size="11" fill="#fff">IT</text></svg>
<svg class="a" style="left:519px;top:220px" width="9" height="9" viewBox="0 0 9 9"><rect x="0.5" y="0.5" width="8" height="8" rx="1" fill="url(#ebg)" stroke="#8e8e8e"/><path d="M2 4.5 H7" stroke="#2c4a9a" stroke-width="1"/></svg>
<svg class="a" style="left:536px;top:215px" width="24" height="20" viewBox="0 0 24 20"><path d="M0 1 Q0 0 1 0 H10.5 L13.5 3 H22.5 V7 H4 L1.5 18.5 H0 Z" fill="#757575"/><path d="M4 7 H24 L21 19.6 H2.2 Z" fill="#e8b463" stroke="#fff" stroke-width="0.7" paint-order="stroke"/></svg>
<svg class="a" style="left:566px;top:244px" width="20" height="24" viewBox="0 0 20 24"><rect x="1.5" y="1" width="17.5" height="22" fill="#fff" stroke="#3b74bd" stroke-width="2"/><path d="M6 4.5 H15" stroke="#7a7a7a" stroke-width="1"/><path d="M6 7.5 H15" stroke="#7a7a7a" stroke-width="1"/><path d="M6 10.5 H15" stroke="#7a7a7a" stroke-width="1"/><path d="M6 13.5 H15" stroke="#7a7a7a" stroke-width="1"/><path d="M6 16.5 H15" stroke="#7a7a7a" stroke-width="1"/><path d="M6 19.5 H15" stroke="#7a7a7a" stroke-width="1"/><circle cx="1.8" cy="3" r="1.1" fill="#fff" stroke="#5a7db0" stroke-width="0.7"/><circle cx="1.8" cy="6" r="1.1" fill="#fff" stroke="#5a7db0" stroke-width="0.7"/><circle cx="1.8" cy="9" r="1.1" fill="#fff" stroke="#5a7db0" stroke-width="0.7"/><circle cx="1.8" cy="12" r="1.1" fill="#fff" stroke="#5a7db0" stroke-width="0.7"/><circle cx="1.8" cy="15" r="1.1" fill="#fff" stroke="#5a7db0" stroke-width="0.7"/><circle cx="1.8" cy="18" r="1.1" fill="#fff" stroke="#5a7db0" stroke-width="0.7"/><circle cx="1.8" cy="21" r="1.1" fill="#fff" stroke="#5a7db0" stroke-width="0.7"/></svg>
<svg class="a" style="left:566px;top:276px" width="20" height="24" viewBox="0 0 20 24"><rect x="1.5" y="1" width="17.5" height="22" fill="#fff" stroke="#3b74bd" stroke-width="2"/><path d="M6 4.5 H15" stroke="#7a7a7a" stroke-width="1"/><path d="M6 7.5 H15" stroke="#7a7a7a" stroke-width="1"/><path d="M6 10.5 H15" stroke="#7a7a7a" stroke-width="1"/><path d="M6 13.5 H15" stroke="#7a7a7a" stroke-width="1"/><path d="M6 16.5 H15" stroke="#7a7a7a" stroke-width="1"/><path d="M6 19.5 H15" stroke="#7a7a7a" stroke-width="1"/><circle cx="1.8" cy="3" r="1.1" fill="#fff" stroke="#5a7db0" stroke-width="0.7"/><circle cx="1.8" cy="6" r="1.1" fill="#fff" stroke="#5a7db0" stroke-width="0.7"/><circle cx="1.8" cy="9" r="1.1" fill="#fff" stroke="#5a7db0" stroke-width="0.7"/><circle cx="1.8" cy="12" r="1.1" fill="#fff" stroke="#5a7db0" stroke-width="0.7"/><circle cx="1.8" cy="15" r="1.1" fill="#fff" stroke="#5a7db0" stroke-width="0.7"/><circle cx="1.8" cy="18" r="1.1" fill="#fff" stroke="#5a7db0" stroke-width="0.7"/><circle cx="1.8" cy="21" r="1.1" fill="#fff" stroke="#5a7db0" stroke-width="0.7"/></svg>
<svg class="a" style="left:519px;top:316px" width="9" height="9" viewBox="0 0 9 9"><rect x="0.5" y="0.5" width="8" height="8" rx="1" fill="url(#ebg)" stroke="#8e8e8e"/><path d="M2 4.5 H7" stroke="#2c4a9a" stroke-width="1"/><path d="M4.5 2 V7" stroke="#2c4a9a" stroke-width="1"/></svg>
<svg class="a" style="left:536px;top:311px" width="24" height="20" viewBox="0 0 24 20"><path d="M0 1 Q0 0 1 0 H10.5 L13.5 3 H22.5 V7 H4 L1.5 18.5 H0 Z" fill="#757575"/><path d="M4 7 H24 L21 19.6 H2.2 Z" fill="#e8b463" stroke="#fff" stroke-width="0.7" paint-order="stroke"/></svg>
<svg class="a" style="left:519px;top:348px" width="9" height="9" viewBox="0 0 9 9"><rect x="0.5" y="0.5" width="8" height="8" rx="1" fill="url(#ebg)" stroke="#8e8e8e"/><path d="M2 4.5 H7" stroke="#2c4a9a" stroke-width="1"/><path d="M4.5 2 V7" stroke="#2c4a9a" stroke-width="1"/></svg>
<svg class="a" style="left:536px;top:340px" width="24" height="24" viewBox="0 0 24 24"><path d="M1 23 V10.5 L8 7 V10.5 L15 7 V10.5 H23 V23 Z" fill="#6d6d6d"/><rect x="0" y="22" width="24" height="2" fill="#6d6d6d"/><rect x="18" y="4.5" width="3" height="6" fill="#3b7bc4"/><path d="M18.6 3.6 Q20 1.2 24 1" stroke="#6d6d6d" stroke-width="1.2" fill="none"/><rect x="3" y="14" width="5" height="2" fill="#fff"/><rect x="3" y="17" width="5" height="2" fill="#fff"/><rect x="9" y="14" width="5" height="2" fill="#fff"/><rect x="9" y="17" width="5" height="2" fill="#fff"/><rect x="15" y="14" width="5" height="2" fill="#fff"/><rect x="15" y="17" width="5" height="2" fill="#fff"/></svg>
<svg class="a" style="left:519px;top:380px" width="9" height="9" viewBox="0 0 9 9"><rect x="0.5" y="0.5" width="8" height="8" rx="1" fill="url(#ebg)" stroke="#8e8e8e"/><path d="M2 4.5 H7" stroke="#2c4a9a" stroke-width="1"/></svg>
<svg class="a" style="left:536px;top:375px" width="24" height="20" viewBox="0 0 24 20"><path d="M0 1 Q0 0 1 0 H10.5 L13.5 3 H22.5 V7 H4 L1.5 18.5 H0 Z" fill="#757575"/><path d="M4 7 H24 L21 19.6 H2.2 Z" fill="#e8b463" stroke="#fff" stroke-width="0.7" paint-order="stroke"/></svg>
<svg class="a" style="left:566px;top:404px" width="23" height="24" viewBox="0 0 23 24"><rect x="1.5" y="1" width="17" height="22" fill="#fff" stroke="#2f6fbf" stroke-width="2"/><path d="M6 5 H15" stroke="#7a7a7a" stroke-width="1"/><path d="M6 8 H15" stroke="#7a7a7a" stroke-width="1"/><path d="M6 11 H15" stroke="#7a7a7a" stroke-width="1"/><path d="M6 14 H15" stroke="#7a7a7a" stroke-width="1"/><path d="M6 17 H15" stroke="#7a7a7a" stroke-width="1"/><circle cx="1.8" cy="3" r="1.1" fill="#fff" stroke="#5a7db0" stroke-width="0.7"/><circle cx="1.8" cy="6" r="1.1" fill="#fff" stroke="#5a7db0" stroke-width="0.7"/><circle cx="1.8" cy="9" r="1.1" fill="#fff" stroke="#5a7db0" stroke-width="0.7"/><circle cx="1.8" cy="12" r="1.1" fill="#fff" stroke="#5a7db0" stroke-width="0.7"/><circle cx="1.8" cy="15" r="1.1" fill="#fff" stroke="#5a7db0" stroke-width="0.7"/><circle cx="1.8" cy="18" r="1.1" fill="#fff" stroke="#5a7db0" stroke-width="0.7"/><circle cx="1.8" cy="21" r="1.1" fill="#fff" stroke="#5a7db0" stroke-width="0.7"/><path d="M22 10 V23 H9 Z" fill="#e8b463"/><path d="M10 12 L20 21" stroke="#2f6fbf" stroke-width="3"/><path d="M19.5 20.5 L22 23" stroke="#2f6fbf" stroke-width="1.2"/></svg>
<svg class="a" style="left:519px;top:444px" width="9" height="9" viewBox="0 0 9 9"><rect x="0.5" y="0.5" width="8" height="8" rx="1" fill="url(#ebg)" stroke="#8e8e8e"/><path d="M2 4.5 H7" stroke="#2c4a9a" stroke-width="1"/><path d="M4.5 2 V7" stroke="#2c4a9a" stroke-width="1"/></svg>
<svg class="a" style="left:536px;top:436px" width="24" height="24" viewBox="0 0 24 24"><path d="M12 12 L6.00 1.61 A12 12 0 0 1 18.00 1.61 Z" fill="#e8b463"/><path d="M12 12 L18.00 1.61 A12 12 0 0 1 24.00 12.00 Z" fill="#545454"/><path d="M12 12 L24.00 12.00 A12 12 0 0 1 18.00 22.39 Z" fill="#e8b463"/><path d="M12 12 L18.00 22.39 A12 12 0 0 1 6.00 22.39 Z" fill="#545454"/><path d="M12 12 L6.00 22.39 A12 12 0 0 1 0.00 12.00 Z" fill="#e8b463"/><path d="M12 12 L0.00 12.00 A12 12 0 0 1 6.00 1.61 Z" fill="#545454"/><rect x="11.5" y="12.5" width="12" height="11" fill="#fff" stroke="#6a6a6a"/><rect x="11" y="12" width="13" height="2" fill="#d53a2a"/><path d="M14 17 H21 M14 19 H21 M14 21 H21" stroke="#444" stroke-width="0.9"/></svg>
<svg class="a" style="left:519px;top:476px" width="9" height="9" viewBox="0 0 9 9"><rect x="0.5" y="0.5" width="8" height="8" rx="1" fill="url(#ebg)" stroke="#8e8e8e"/><path d="M2 4.5 H7" stroke="#2c4a9a" stroke-width="1"/><path d="M4.5 2 V7" stroke="#2c4a9a" stroke-width="1"/></svg>
<svg class="a" style="left:536px;top:470px" width="24" height="24" viewBox="0 0 24 24"><g fill="none" stroke="#333" stroke-width="1.3"><rect x="10.5" y="2.5" width="13" height="13" rx="1"/><path d="M10.5 15.5 V6 H5 L0.8 10.5 V15.5 H10.5"/><path d="M1 10.5 H6 V6"/><circle cx="5" cy="17" r="2.3" fill="#fff"/><circle cx="18" cy="17" r="2.3" fill="#fff"/></g></svg>
<svg class="a" style="left:519px;top:508px" width="9" height="9" viewBox="0 0 9 9"><rect x="0.5" y="0.5" width="8" height="8" rx="1" fill="url(#ebg)" stroke="#8e8e8e"/><path d="M2 4.5 H7" stroke="#2c4a9a" stroke-width="1"/><path d="M4.5 2 V7" stroke="#2c4a9a" stroke-width="1"/></svg>
<svg class="a" style="left:536px;top:500px" width="24" height="24" viewBox="0 0 24 24"><path d="M2 3 Q2 0 11 0 Q20 0 20 3 V11 H12 V23 Q2 23 2 21 Z" fill="#666"/><ellipse cx="11" cy="2.8" rx="8" ry="1.8" fill="#fff"/><path d="M4.5 6 V21 M2 9.5 H8 M2 16 H8" stroke="#fff" stroke-width="1"/><rect x="11.5" y="12.5" width="12" height="11" fill="#fff" stroke="#6a6a6a"/><rect x="11" y="12" width="13" height="2" fill="#d53a2a"/><path d="M14 17 H21 M14 19 H21 M14 21 H21" stroke="#444" stroke-width="0.9"/></svg>
<svg class="a" style="left:519px;top:540px" width="9" height="9" viewBox="0 0 9 9"><rect x="0.5" y="0.5" width="8" height="8" rx="1" fill="url(#ebg)" stroke="#8e8e8e"/><path d="M2 4.5 H7" stroke="#2c4a9a" stroke-width="1"/><path d="M4.5 2 V7" stroke="#2c4a9a" stroke-width="1"/></svg>
<svg class="a" style="left:536px;top:532px" width="24" height="24" viewBox="0 0 24 24"><path d="M6.5 7 Q7 1.5 12 1.5 Q17 1.5 17.5 7 H19.5 V8.3 H4.5 V7 Z" fill="#e8b463"/><rect x="10.6" y="2.5" width="1.6" height="2.5" fill="#fff"/><rect x="7.8" y="3.5" width="1" height="2" fill="#fff"/><rect x="14.2" y="3.5" width="1" height="2" fill="#fff"/><path d="M8.3 9 L10 13 L10.5 18" stroke="#555" stroke-width="1.3" fill="none"/><path d="M15.5 9 L15 12" stroke="#555" stroke-width="1.2"/><path d="M1 22 Q0 17 2.5 15.5 L6.5 14 Q7.5 18 6 24 Z" fill="#5a5a5a"/><rect x="11.5" y="12.5" width="12" height="11" fill="#fff" stroke="#6a6a6a"/><rect x="11" y="12" width="13" height="2" fill="#d53a2a"/><path d="M14 17 H21 M14 19 H21 M14 21 H21" stroke="#444" stroke-width="0.9"/></svg>
<svg class="a" style="left:519px;top:572px" width="9" height="9" viewBox="0 0 9 9"><rect x="0.5" y="0.5" width="8" height="8" rx="1" fill="url(#ebg)" stroke="#8e8e8e"/><path d="M2 4.5 H7" stroke="#2c4a9a" stroke-width="1"/><path d="M4.5 2 V7" stroke="#2c4a9a" stroke-width="1"/></svg>
<svg class="a" style="left:536px;top:564px" width="24" height="24" viewBox="0 0 24 24"><path d="M0 4 H3 V21 H12 V23.5 H0 Z" fill="#3b74bd"/><path d="M19 4 H22 V14 L19 14 Z" fill="#3b74bd"/><path d="M2.5 1.5 Q7 0.5 11 1.5 Q15 0.5 20 1.5 V13 H11 V20.5 H2.5 Z" fill="#fff" stroke="#777" stroke-width="0.9"/><path d="M11 2 V12" stroke="#aaa" stroke-width="1"/><path d="M4.5 5 H9 M4.5 7 H9 M4.5 9 H9 M4.5 11 H9 M4.5 13 H9 M4.5 15 H9 M13 5 H18 M13 7 H18 M13 9 H18" stroke="#999" stroke-width="0.9"/><rect x="11.5" y="12.5" width="12" height="11" fill="#fff" stroke="#6a6a6a"/><rect x="11" y="12" width="13" height="2" fill="#d53a2a"/><path d="M14 17 H21 M14 19 H21 M14 21 H21" stroke="#444" stroke-width="0.9"/></svg>
<svg class="a" style="left:519px;top:604px" width="9" height="9" viewBox="0 0 9 9"><rect x="0.5" y="0.5" width="8" height="8" rx="1" fill="url(#ebg)" stroke="#8e8e8e"/><path d="M2 4.5 H7" stroke="#2c4a9a" stroke-width="1"/><path d="M4.5 2 V7" stroke="#2c4a9a" stroke-width="1"/></svg>
<svg class="a" style="left:536px;top:599px" width="24" height="20" viewBox="0 0 24 20"><path d="M0 1 Q0 0 1 0 H10.5 L13.5 3 H22.5 V7 H4 L1.5 18.5 H0 Z" fill="#757575"/><path d="M4 7 H24 L21 19.6 H2.2 Z" fill="#e8b463" stroke="#fff" stroke-width="0.7" paint-order="stroke"/></svg>
<svg class="a" style="left:519px;top:636px" width="9" height="9" viewBox="0 0 9 9"><rect x="0.5" y="0.5" width="8" height="8" rx="1" fill="url(#ebg)" stroke="#8e8e8e"/><path d="M2 4.5 H7" stroke="#2c4a9a" stroke-width="1"/><path d="M4.5 2 V7" stroke="#2c4a9a" stroke-width="1"/></svg>
<svg class="a" style="left:536px;top:628px" width="24" height="24" viewBox="0 0 24 24"><path d="M8 1.5 L14 10.5" stroke="#3b74bd" stroke-width="4" stroke-linecap="round"/><path d="M8.2 2 L13.6 10" stroke="#fff" stroke-width="1.6"/><path d="M9 9 Q3 11 3 16 Q3 21 9 21.5" stroke="#3b74bd" stroke-width="2.8" fill="none"/><path d="M6 22.5 H12" stroke="#3b74bd" stroke-width="2"/><rect x="11.5" y="12.5" width="12" height="11" fill="#fff" stroke="#6a6a6a"/><rect x="11" y="12" width="13" height="2" fill="#d53a2a"/><path d="M14 17 H21 M14 19 H21 M14 21 H21" stroke="#444" stroke-width="0.9"/></svg>
<svg class="a" style="left:519px;top:668px" width="9" height="9" viewBox="0 0 9 9"><rect x="0.5" y="0.5" width="8" height="8" rx="1" fill="url(#ebg)" stroke="#8e8e8e"/><path d="M2 4.5 H7" stroke="#2c4a9a" stroke-width="1"/></svg>
<svg class="a" style="left:536px;top:660px" width="24" height="24" viewBox="0 0 24 24"><path d="M11 5 L17.5 1.5 L24 4.5 V12 H11 Z" fill="#6d6d6d"/><rect x="15" y="7" width="2.5" height="3" fill="#fff"/><g transform="translate(-3 -2.2) scale(0.75)"><path d="M9.3 3 Q16 5 16.5 12.5 L18 13.8 Q20 13.5 21.5 13 Q23.5 18 23 24 Q22.5 31 15.5 34.5 Q18.5 29 18.8 25 L16.5 24.8 Q15 20 12 19 Q12.5 23 11.5 25 L9.8 25 Q8.5 30 10.5 34.5 Q5 32 4.2 24 Q3.8 17 8.5 10.5 L10.5 13 Q11 7 9.3 3 Z" fill="#e8b363" stroke="#efc12a" stroke-width="1.1"/></g><rect x="11.5" y="12.5" width="12" height="11" fill="#fff" stroke="#6a6a6a"/><rect x="11" y="12" width="13" height="2" fill="#d53a2a"/><path d="M14 17 H21 M14 19 H21 M14 21 H21" stroke="#444" stroke-width="0.9"/></svg>
<svg class="a" style="left:566px;top:692px" width="23" height="24" viewBox="0 0 23 24"><rect x="1.5" y="1" width="17" height="22" fill="#fff" stroke="#2f6fbf" stroke-width="2"/><path d="M6 5 H15" stroke="#7a7a7a" stroke-width="1"/><path d="M6 8 H15" stroke="#7a7a7a" stroke-width="1"/><path d="M6 11 H15" stroke="#7a7a7a" stroke-width="1"/><path d="M6 14 H15" stroke="#7a7a7a" stroke-width="1"/><path d="M6 17 H15" stroke="#7a7a7a" stroke-width="1"/><circle cx="1.8" cy="3" r="1.1" fill="#fff" stroke="#5a7db0" stroke-width="0.7"/><circle cx="1.8" cy="6" r="1.1" fill="#fff" stroke="#5a7db0" stroke-width="0.7"/><circle cx="1.8" cy="9" r="1.1" fill="#fff" stroke="#5a7db0" stroke-width="0.7"/><circle cx="1.8" cy="12" r="1.1" fill="#fff" stroke="#5a7db0" stroke-width="0.7"/><circle cx="1.8" cy="15" r="1.1" fill="#fff" stroke="#5a7db0" stroke-width="0.7"/><circle cx="1.8" cy="18" r="1.1" fill="#fff" stroke="#5a7db0" stroke-width="0.7"/><circle cx="1.8" cy="21" r="1.1" fill="#fff" stroke="#5a7db0" stroke-width="0.7"/><path d="M22 10 V23 H9 Z" fill="#e8b463"/><path d="M10 12 L20 21" stroke="#2f6fbf" stroke-width="3"/><path d="M19.5 20.5 L22 23" stroke="#2f6fbf" stroke-width="1.2"/></svg>
<svg class="a" style="left:566px;top:724px" width="20" height="24" viewBox="0 0 20 24"><rect x="1.5" y="1" width="17.5" height="22" fill="#fff" stroke="#3b74bd" stroke-width="2"/><path d="M6 4.5 H15" stroke="#7a7a7a" stroke-width="1"/><path d="M6 7.5 H15" stroke="#7a7a7a" stroke-width="1"/><path d="M6 10.5 H15" stroke="#7a7a7a" stroke-width="1"/><path d="M6 13.5 H15" stroke="#7a7a7a" stroke-width="1"/><path d="M6 16.5 H15" stroke="#7a7a7a" stroke-width="1"/><path d="M6 19.5 H15" stroke="#7a7a7a" stroke-width="1"/><circle cx="1.8" cy="3" r="1.1" fill="#fff" stroke="#5a7db0" stroke-width="0.7"/><circle cx="1.8" cy="6" r="1.1" fill="#fff" stroke="#5a7db0" stroke-width="0.7"/><circle cx="1.8" cy="9" r="1.1" fill="#fff" stroke="#5a7db0" stroke-width="0.7"/><circle cx="1.8" cy="12" r="1.1" fill="#fff" stroke="#5a7db0" stroke-width="0.7"/><circle cx="1.8" cy="15" r="1.1" fill="#fff" stroke="#5a7db0" stroke-width="0.7"/><circle cx="1.8" cy="18" r="1.1" fill="#fff" stroke="#5a7db0" stroke-width="0.7"/><circle cx="1.8" cy="21" r="1.1" fill="#fff" stroke="#5a7db0" stroke-width="0.7"/></svg>
<svg class="a" style="left:519px;top:764px" width="9" height="9" viewBox="0 0 9 9"><rect x="0.5" y="0.5" width="8" height="8" rx="1" fill="url(#ebg)" stroke="#8e8e8e"/><path d="M2 4.5 H7" stroke="#2c4a9a" stroke-width="1"/><path d="M4.5 2 V7" stroke="#2c4a9a" stroke-width="1"/></svg>
<svg class="a" style="left:536px;top:759px" width="24" height="20" viewBox="0 0 24 20"><path d="M0 1 Q0 0 1 0 H10.5 L13.5 3 H22.5 V7 H4 L1.5 18.5 H0 Z" fill="#757575"/><path d="M4 7 H24 L21 19.6 H2.2 Z" fill="#e8b463" stroke="#fff" stroke-width="0.7" paint-order="stroke"/></svg>
<svg class="a" style="left:519px;top:796px" width="9" height="9" viewBox="0 0 9 9"><rect x="0.5" y="0.5" width="8" height="8" rx="1" fill="url(#ebg)" stroke="#8e8e8e"/><path d="M2 4.5 H7" stroke="#2c4a9a" stroke-width="1"/><path d="M4.5 2 V7" stroke="#2c4a9a" stroke-width="1"/></svg>
<svg class="a" style="left:536px;top:788px" width="24" height="24" viewBox="0 0 24 24"><path d="M3 3.5 H19" stroke="#666" stroke-width="1.6"/><path d="M16 0.5 L19.5 3.5 L16 6.5" stroke="#666" stroke-width="1.6" fill="none"/><rect x="2" y="8" width="7" height="8" fill="#3b74bd"/><path d="M11 10.5 H15.5 M17.5 10.5 H22" stroke="#3b74bd" stroke-width="1.6"/><path d="M0.5 24 V21.5 Q0.5 19 3 19 H10.5 V24 Z" fill="#666"/><circle cx="4.5" cy="21.5" r="1.4" fill="#fff"/><rect x="11.5" y="12.5" width="12" height="11" fill="#fff" stroke="#6a6a6a"/><rect x="11" y="12" width="13" height="2" fill="#d53a2a"/><path d="M14 17 H21 M14 19 H21 M14 21 H21" stroke="#444" stroke-width="0.9"/></svg>
<svg class="a" style="left:519px;top:828px" width="9" height="9" viewBox="0 0 9 9"><rect x="0.5" y="0.5" width="8" height="8" rx="1" fill="url(#ebg)" stroke="#8e8e8e"/><path d="M2 4.5 H7" stroke="#2c4a9a" stroke-width="1"/><path d="M4.5 2 V7" stroke="#2c4a9a" stroke-width="1"/></svg>
<svg class="a" style="left:536px;top:823px" width="24" height="20" viewBox="0 0 24 20"><path d="M0 1 Q0 0 1 0 H10.5 L13.5 3 H22.5 V7 H4 L1.5 18.5 H0 Z" fill="#757575"/><path d="M4 7 H24 L21 19.6 H2.2 Z" fill="#e8b463" stroke="#fff" stroke-width="0.7" paint-order="stroke"/></svg>
<svg class="a" style="left:519px;top:860px" width="9" height="9" viewBox="0 0 9 9"><rect x="0.5" y="0.5" width="8" height="8" rx="1" fill="url(#ebg)" stroke="#8e8e8e"/><path d="M2 4.5 H7" stroke="#2c4a9a" stroke-width="1"/><path d="M4.5 2 V7" stroke="#2c4a9a" stroke-width="1"/></svg>
<svg class="a" style="left:536px;top:852px" width="24" height="24" viewBox="0 0 24 24"><path d="M5.5 7 Q5 0 12 0 Q19 0 18.5 7 Q18 14 12 14 Q6 14 5.5 7 Z" fill="#666"/><path d="M7.5 5.5 Q12 3 16.5 5.5 Q17 12.5 12 12.5 Q7 12.5 7.5 5.5 Z" fill="#fff"/><path d="M0 24 Q0 17 7 15 L12 17 L17 15 Q24 17 24 24 Z" fill="#666"/><path d="M9.8 16 L12 24 L14.2 16 Z" fill="#fff"/><path d="M11.2 17.5 L12 23 L12.8 17.5 Z" fill="#666"/></svg>
<svg class="a" style="left:967px;top:115px" width="10" height="10" viewBox="0 0 10 10"><path d="M1 1 L9 9 M9 1 L1 9" stroke="#fff" stroke-width="1.5"/></svg>
<svg class="a" style="left:1900px;top:120px" width="8" height="4" viewBox="0 0 8 4"><path d="M0 0 H8 L4 4 Z" fill="#f1f1f1"/></svg>
<svg class="a" style="left:1053px;top:138px" width="32" height="32" viewBox="0 0 24 24"><path d="M1 23 V10.5 L8 7 V10.5 L15 7 V10.5 H23 V23 Z" fill="#6d6d6d"/><rect x="0" y="22" width="24" height="2" fill="#6d6d6d"/><rect x="18" y="4.5" width="3" height="6" fill="#3b7bc4"/><path d="M18.6 3.6 Q20 1.2 24 1" stroke="#6d6d6d" stroke-width="1.2" fill="none"/><rect x="3" y="14" width="5" height="2" fill="#fff"/><rect x="3" y="17" width="5" height="2" fill="#fff"/><rect x="9" y="14" width="5" height="2" fill="#fff"/><rect x="9" y="17" width="5" height="2" fill="#fff"/><rect x="15" y="14" width="5" height="2" fill="#fff"/><rect x="15" y="17" width="5" height="2" fill="#fff"/></svg>
<div class="a" style="left:1052px;top:190px;width:858px;height:331px;border:1px solid #dcdcdc;"></div>
<div class="a" style="left:1059px;top:189px;width:52px;height:3px;background:#f0f0f0;"></div>
<div class="a" style="left:1052px;top:537px;width:858px;height:331px;border:1px solid #dcdcdc;"></div>
<div class="a" style="left:1059px;top:536px;width:122px;height:3px;background:#f0f0f0;"></div>
<div class="a" style="left:1052px;top:884px;width:858px;height:120px;border:1px solid #dcdcdc;"></div>
<div class="a" style="left:1059px;top:883px;width:137px;height:3px;background:#f0f0f0;"></div>
<div class="a" style="left:1171px;top:203px;width:734px;height:23px;background:#fff;border:1px solid #7a7a7a;"></div>
<div class="a" style="left:1171px;top:230px;width:734px;height:208px;background:#fff;border:1px solid #7a7a7a;"></div>
<div class="a" style="left:1171px;top:442px;width:734px;height:23px;background:#fff;border:1px solid #7a7a7a;"></div>
<div class="a" style="left:1171px;top:469px;width:734px;height:23px;background:#fff;border:1px solid #7a7a7a;"></div>
<div class="a" style="left:1171px;top:500px;width:13px;height:13px;background:#fff;border:1px solid #333;"></div>
<div class="a" style="left:1159px;top:550px;width:746px;height:23px;background:#fff;border:1px solid #7a7a7a;"></div>
<div class="a" style="left:1159px;top:577px;width:746px;height:178px;background:#fff;border:1px solid #7a7a7a;"></div>
<svg class="a" style="left:1159px;top:764px" width="13" height="13" viewBox="0 0 13 13"><circle cx="6.5" cy="6.5" r="5.8" fill="#fff" stroke="#333" stroke-width="1"/></svg>
<svg class="a" style="left:1159px;top:792px" width="13" height="13" viewBox="0 0 13 13"><circle cx="6.5" cy="6.5" r="5.8" fill="#fff" stroke="#333" stroke-width="1"/></svg>
<div class="a" style="left:1159px;top:815px;width:746px;height:23px;background:#fff;border:1px solid #7a7a7a;"></div>
<div class="a" style="left:1159px;top:842px;width:746px;height:23px;background:#fff;border:1px solid #7a7a7a;"></div>
<div class="a" style="left:1151px;top:897px;width:375px;height:23px;background:#fff;border:1px solid #7a7a7a;"></div>
<div class="a" style="left:1530px;top:897px;width:375px;height:23px;background:#fff;border:1px solid #7a7a7a;"></div>
<div class="a" style="left:1530px;top:925px;width:375px;height:22px;background:#fff;border:1px solid #7a7a7a;"></div>
<div class="a" style="left:1529px;top:951px;width:377px;height:22px;background:#fff;border:1px solid #bdbdbd;"></div>
<div class="a" style="left:1530px;top:976px;width:375px;height:23px;background:#fff;border:1px solid #7a7a7a;"></div>
<svg class="a" style="left:1498px;top:903px" width="20" height="11" viewBox="0 0 20 11"><rect x="0.5" y="0.5" width="10" height="10" fill="#eee" stroke="#8a8a8a"/><path d="M2 3 H9 M2 5 H9 M2 7 H9 M3.5 2 V9 M5.5 2 V9 M7.5 2 V9" stroke="#aaa" stroke-width="0.6"/><path d="M13 3.5 H19 L16 6.5 Z" fill="#3b5a9a"/></svg>
<svg class="a" style="left:1878px;top:903px" width="20" height="11" viewBox="0 0 20 11"><rect x="0.5" y="0.5" width="10" height="10" fill="#eee" stroke="#8a8a8a"/><path d="M2 3 H9 M2 5 H9 M2 7 H9 M3.5 2 V9 M5.5 2 V9 M7.5 2 V9" stroke="#aaa" stroke-width="0.6"/><path d="M13 3.5 H19 L16 6.5 Z" fill="#3b5a9a"/></svg>
<div class="a" style="left:15px;top:863px;width:437px;height:133px;border:1px solid #777;background:linear-gradient(#ffffff,#e6e6f2)"></div>
<svg class="a" style="left:28px;top:876px" width="26" height="26" viewBox="0 0 26 26"><circle cx="13" cy="13" r="13" fill="#3a78b6"/><rect x="11.3" y="10.5" width="3.4" height="10" fill="#fff"/><circle cx="13" cy="6.5" r="2" fill="#fff"/></svg>
<div class="a" style="left:460px;top:856px;width:16px;height:151px;background:#f0f0f0;"></div>
<div class="a" style="left:461px;top:872px;width:14px;height:116px;background:#cdcdcd;"></div>
<svg class="a" style="left:463px;top:860px" width="10" height="6" viewBox="0 0 10 6"><path d="M0.5 5.5 L5 1 L9.5 5.5" fill="none" stroke="#555" stroke-width="1.5"/></svg>
<svg class="a" style="left:463px;top:996px" width="10" height="6" viewBox="0 0 10 6"><path d="M0.5 0.5 L5 5 L9.5 0.5" fill="none" stroke="#555" stroke-width="1.5"/></svg>
<div class="a" style="left:1614px;top:1018px;width:1px;height:20px;background:#c8c8c8;"></div>
<div class="a" style="left:1691px;top:1018px;width:1px;height:20px;background:#c8c8c8;"></div>
<div class="a" style="left:1746px;top:1018px;width:1px;height:20px;background:#c8c8c8;"></div>
<div class="a" style="left:1876px;top:1018px;width:1px;height:20px;background:#c8c8c8;"></div>
<svg class="a" style="left:1617px;top:1019px" width="14" height="18" viewBox="0 0 14 18"><circle cx="7" cy="7" r="6.5" fill="#e0552a"/><circle cx="7" cy="7" r="4" fill="#f07a3a"/><path d="M3 11 L1 17 L4.5 15.5 L6.5 17.5 L7 12 M11 11 L13 17 L9.5 15.5 L7.5 17.5 L7 12" fill="#d84a22"/></svg>
<svg class="a" style="left:1693px;top:1020px" width="17" height="17" viewBox="0 0 17 17"><path d="M7 10 L10 7" stroke="#2e6db4" stroke-width="1.8"/><rect x="1.5" y="8.5" width="7" height="4.5" rx="2.2" transform="rotate(-45 5 10.75)" fill="none" stroke="#2e6db4" stroke-width="1.8"/><rect x="8.5" y="3.5" width="7" height="4.5" rx="2.2" transform="rotate(-45 12 5.75)" fill="none" stroke="#2e6db4" stroke-width="1.8"/></svg>
<svg class="a" style="left:1748px;top:1020px" width="17" height="17" viewBox="0 0 17 17"><circle cx="8.5" cy="8.5" r="7.3" fill="none" stroke="#444" stroke-width="1.6"/><path d="M8.5 4 V9 H12" fill="none" stroke="#2e6db4" stroke-width="1.5"/></svg>
<svg class="a" style="left:1880px;top:1020px" width="15" height="15" viewBox="0 0 15 15"><circle cx="7.5" cy="7.5" r="7.5" fill="#3d78bb"/><text x="7.5" y="10.02" text-anchor="middle" font-family="Liberation Sans" font-size="7" fill="#fff">IT</text></svg>
<svg class="a" style="left:1898px;top:1027px" width="7" height="4" viewBox="0 0 7 4"><path d="M0 0 H7 L3.5 3.6 Z" fill="#000"/></svg>
<div class="t k" style="left:23.30px;top:5.84px;font-size:12px;line-height:12px;color:#000;transform:scaleX(0.9462);transform-origin:0 0;">Certifico ADR Manager 2019.10 BETA</div>
<div class="t k" style="left:14.30px;top:31.14px;font-size:12px;line-height:12px;color:#000;">File</div>
<div class="t k" style="left:51.30px;top:31.14px;font-size:12px;line-height:12px;color:#000;transform:scaleX(1.0832);transform-origin:0 0;">Modifica</div>
<div class="t k" style="left:117.30px;top:31.14px;font-size:12px;line-height:12px;color:#000;transform:scaleX(0.9553);transform-origin:0 0;">Visualizza</div>
<div class="t k" style="left:186.30px;top:31.14px;font-size:12px;line-height:12px;color:#000;transform:scaleX(1.0399);transform-origin:0 0;">Strumenti</div>
<div class="t k" style="left:257.30px;top:31.14px;font-size:12px;line-height:12px;color:#000;transform:scaleX(0.9781);transform-origin:0 0;">Finestra</div>
<div class="t k" style="left:316.30px;top:31.14px;font-size:12px;line-height:12px;color:#000;transform:scaleX(1.1088);transform-origin:0 0;">?</div>
<div class="t k" style="left:13.20px;top:87.34px;font-size:12px;line-height:12px;color:#000;transform:scaleX(1.0770);transform-origin:0 0;">Aggiungi</div>
<div class="t k" style="left:78.80px;top:87.34px;font-size:12px;line-height:12px;color:#000;transform:scaleX(1.0319);transform-origin:0 0;">Anagrafica</div>
<div class="t k" style="left:158.80px;top:87.34px;font-size:12px;line-height:12px;color:#000;transform:scaleX(1.0104);transform-origin:0 0;">Eventi</div>
<div class="t k" style="left:211.60px;top:87.34px;font-size:12px;line-height:12px;color:#000;transform:scaleX(1.0530);transform-origin:0 0;">Documenti</div>
<div class="t k" style="left:299.10px;top:87.34px;font-size:12px;line-height:12px;color:#000;transform:scaleX(1.0245);transform-origin:0 0;">Report</div>
<div class="t k" style="left:345.10px;top:87.34px;font-size:12px;line-height:12px;color:#000;transform:scaleX(1.0301);transform-origin:0 0;">Etichette</div>
<div class="t k" style="left:401.90px;top:87.34px;font-size:12px;line-height:12px;color:#000;transform:scaleX(1.0660);transform-origin:0 0;">Notizie</div>
<div class="t" style="left:467.80px;top:87.34px;font-size:12px;line-height:12px;color:#999999;transform:scaleX(0.9661);transform-origin:0 0;">Salva</div>
<div class="t k" style="left:506.00px;top:87.34px;font-size:12px;line-height:12px;color:#000;transform:scaleX(1.0141);transform-origin:0 0;">Salva tutto</div>
<div class="t" style="left:579.10px;top:87.34px;font-size:12px;line-height:12px;color:#999999;transform:scaleX(1.0142);transform-origin:0 0;">Taglia</div>
<div class="t" style="left:620.10px;top:87.34px;font-size:12px;line-height:12px;color:#999999;transform:scaleX(1.0366);transform-origin:0 0;">Copia</div>
<div class="t" style="left:661.90px;top:87.34px;font-size:12px;line-height:12px;color:#999999;transform:scaleX(1.0609);transform-origin:0 0;">Incolla</div>
<div class="t" style="left:714.30px;top:87.34px;font-size:12px;line-height:12px;color:#999999;transform:scaleX(1.0243);transform-origin:0 0;">Elimina</div>
<div class="t" style="left:764.10px;top:87.34px;font-size:12px;line-height:12px;color:#999999;transform:scaleX(1.0125);transform-origin:0 0;">Proprietà</div>
<div class="t k" style="left:829.10px;top:87.34px;font-size:12px;line-height:12px;color:#000;transform:scaleX(1.0568);transform-origin:0 0;">Anteprima</div>
<div class="t k" style="left:896.10px;top:87.34px;font-size:12px;line-height:12px;color:#000;transform:scaleX(1.0083);transform-origin:0 0;">Stampa</div>
<div class="t k" style="left:947.20px;top:87.34px;font-size:12px;line-height:12px;color:#000;transform:scaleX(0.9842);transform-origin:0 0;">Esporta</div>
<div class="t k" style="left:997.60px;top:87.34px;font-size:12px;line-height:12px;color:#000;transform:scaleX(1.0616);transform-origin:0 0;">Condividi</div>
<div class="t k" style="left:1882.30px;top:87.34px;font-size:12px;line-height:12px;color:#000;transform:scaleX(1.0729);transform-origin:0 0;">Attiva</div>
<div class="t" style="left:10.80px;top:116.54px;font-size:12px;line-height:12px;color:#f1f1f1;transform:scaleX(1.0356);transform-origin:0 0;">Documenti</div>
<div class="t k" style="left:36.30px;top:138.64px;font-size:12px;line-height:12px;color:#000;transform:scaleX(1.0791);transform-origin:0 0;">Aggiungi</div>
<div class="t k" style="left:112.30px;top:138.64px;font-size:12px;line-height:12px;color:#000;transform:scaleX(1.0530);transform-origin:0 0;">Documenti</div>
<div class="t k" style="left:11.30px;top:161.44px;font-size:12px;line-height:12px;color:#000;transform:scaleX(1.0747);transform-origin:0 0;">Nome</div>
<div class="t k" style="left:424.30px;top:161.44px;font-size:12px;line-height:12px;color:#000;transform:scaleX(1.0497);transform-origin:0 0;">Dati</div>
<div class="t" style="left:424.30px;top:180.24px;font-size:12px;line-height:12px;color:#b8b8b8;transform:scaleX(0.8759);transform-origin:0 0;width:58px;overflow:hidden;">(+39075599</div>
<div class="t k" style="left:50.30px;top:180.24px;font-size:12px;line-height:12px;color:#000;transform:scaleX(0.9887);transform-origin:0 0;">Certifico Srl - IT</div>
<div class="t k" style="left:69.30px;top:198.24px;font-size:12px;line-height:12px;color:#000;transform:scaleX(0.9535);transform-origin:0 0;">Relazioni ADR</div>
<div class="t k" style="left:88.30px;top:216.24px;font-size:12px;line-height:12px;color:#000;transform:scaleX(0.9681);transform-origin:0 0;">Relazioni iniziali ADR</div>
<div class="t k" style="left:107.30px;top:234.24px;font-size:12px;line-height:12px;color:#000;transform:scaleX(0.9496);transform-origin:0 0;">RAI/2019-0001 (rev. 00)</div>
<div class="t k" style="left:126.30px;top:252.24px;font-size:12px;line-height:12px;color:#000;transform:scaleX(1.0070);transform-origin:0 0;">Italiano (Italia)</div>
<div class="t k" style="left:88.30px;top:270.24px;font-size:12px;line-height:12px;color:#000;transform:scaleX(0.9695);transform-origin:0 0;">Relazioni annuali ADR</div>
<div class="t k" style="left:107.30px;top:288.24px;font-size:12px;line-height:12px;color:#000;transform:scaleX(0.9532);transform-origin:0 0;">RAA/2019-0001</div>
<div class="t k" style="left:88.30px;top:306.24px;font-size:12px;line-height:12px;color:#000;transform:scaleX(0.9685);transform-origin:0 0;">Relazioni straordinarie ADR</div>
<div class="t k" style="left:69.30px;top:324.24px;font-size:12px;line-height:12px;color:#000;">Relazioni incidente</div>
<div class="t k" style="left:69.30px;top:342.24px;font-size:12px;line-height:12px;color:#000;">Procedure</div>
<div class="t k" style="left:69.30px;top:360.24px;font-size:12px;line-height:12px;color:#000;transform:scaleX(1.0356);transform-origin:0 0;">Documenti</div>
<div class="t" style="left:10.30px;top:812.14px;font-size:12px;line-height:12px;color:#f1f1f1;transform:scaleX(1.0180);transform-origin:0 0;">Anagrafica</div>
<div class="t" style="left:79.30px;top:812.14px;font-size:12px;line-height:12px;color:#f1f1f1;">Eventi</div>
<div class="t" style="left:123.30px;top:812.14px;font-size:12px;line-height:12px;color:#1a9cf0;transform:scaleX(1.0356);transform-origin:0 0;">Documenti</div>
<div class="t" style="left:10.30px;top:839.04px;font-size:12px;line-height:12px;color:#f1f1f1;transform:scaleX(1.0465);transform-origin:0 0;">Informazioni</div>
<div class="t" style="left:506.30px;top:114.04px;font-size:12px;line-height:12px;color:#f1f1f1;transform:scaleX(0.9464);transform-origin:0 0;">RAI/2019-0001</div>
<div class="t" style="left:633.70px;top:114.04px;font-size:12px;line-height:12px;color:#f1f1f1;transform:scaleX(0.9589);transform-origin:0 0;">Gestione delle relazioni ADR ...</div>
<div class="t" style="left:843.30px;top:114.04px;font-size:12px;line-height:12px;color:#ffffff;transform:scaleX(0.9536);transform-origin:0 0;">RAA/2019-0001 (IT)</div>
<div class="t" style="left:513.30px;top:137.24px;font-size:12px;line-height:12px;color:#8a8a8a;transform:scaleX(1.0546);transform-origin:0 0;">Aggiungi nota</div>
<div class="t" style="left:616.30px;top:137.24px;font-size:12px;line-height:12px;color:#8a8a8a;transform:scaleX(1.0338);transform-origin:0 0;">Rimuovi nota</div>
<div class="t k" style="left:720.30px;top:137.24px;font-size:12px;line-height:12px;color:#000;transform:scaleX(1.0264);transform-origin:0 0;">Valori predefiniti</div>
<div class="t k" style="left:488.30px;top:160.84px;font-size:12px;line-height:12px;color:#000;">Pagina</div>
<div class="t k" style="left:855.30px;top:160.84px;font-size:12px;line-height:12px;color:#000;transform:scaleX(1.0497);transform-origin:0 0;">Dati</div>
<div class="t k" style="left:535.30px;top:186.44px;font-size:12px;line-height:12px;color:#000;transform:scaleX(1.0137);transform-origin:0 0;">Italiano (Italia)</div>
<div class="t k" style="left:563.30px;top:218.44px;font-size:12px;line-height:12px;color:#000;transform:scaleX(1.0369);transform-origin:0 0;">Riferimenti normativi</div>
<div class="t k" style="left:591.30px;top:250.44px;font-size:12px;line-height:12px;color:#000;transform:scaleX(0.9928);transform-origin:0 0;">Riferimenti ADR</div>
<div class="t k" style="left:591.30px;top:282.44px;font-size:12px;line-height:12px;color:#000;transform:scaleX(0.9285);transform-origin:0 0;">ADR 1.8.3</div>
<div class="t k" style="left:563.30px;top:314.44px;font-size:12px;line-height:12px;color:#000;transform:scaleX(0.9412);transform-origin:0 0;">1. Premessa</div>
<div class="t k" style="left:563.30px;top:346.44px;font-size:12px;line-height:12px;color:#000;transform:scaleX(0.9839);transform-origin:0 0;">2. Dati impresa</div>
<div class="t k" style="left:563.30px;top:378.44px;font-size:12px;line-height:12px;color:#000;">2.4. Attività dell&#x27;impresa inerenti le merci pericolose</div>
<div class="t k" style="left:591.30px;top:410.44px;font-size:12px;line-height:12px;color:#000;">Nota del consulente</div>
<div class="t k" style="left:563.30px;top:442.44px;font-size:12px;line-height:12px;color:#000;">3. Merci pericolose</div>
<div class="t k" style="left:563.30px;top:474.44px;font-size:12px;line-height:12px;color:#000;transform:scaleX(0.9869);transform-origin:0 0;">4. Veicoli</div>
<div class="t k" style="left:563.30px;top:506.44px;font-size:12px;line-height:12px;color:#000;transform:scaleX(0.9865);transform-origin:0 0;">5. Imballaggi ADR</div>
<div class="t k" style="left:563.30px;top:538.44px;font-size:12px;line-height:12px;color:#000;transform:scaleX(0.9859);transform-origin:0 0;">6. Personale impiegato in mansioni ADR</div>
<div class="t k" style="left:563.30px;top:570.44px;font-size:12px;line-height:12px;color:#000;transform:scaleX(0.9941);transform-origin:0 0;">7. Registro formazione operatori</div>
<div class="t k" style="left:563.30px;top:602.44px;font-size:12px;line-height:12px;color:#000;transform:scaleX(0.9645);transform-origin:0 0;">8. Descrizione prassi e procedure</div>
<div class="t k" style="left:563.30px;top:634.44px;font-size:12px;line-height:12px;color:#000;transform:scaleX(1.0100);transform-origin:0 0;">9. Controlli documentali/prassi e procedure</div>
<div class="t k" style="left:563.30px;top:666.44px;font-size:12px;line-height:12px;color:#000;transform:scaleX(0.9923);transform-origin:0 0;">10. Incidenti/Emergenze/Sanzioni</div>
<div class="t k" style="left:591.30px;top:698.44px;font-size:12px;line-height:12px;color:#000;">Nota del consulente</div>
<div class="t k" style="left:591.30px;top:730.44px;font-size:12px;line-height:12px;color:#000;transform:scaleX(1.0810);transform-origin:0 0;">Note</div>
<div class="t k" style="left:563.30px;top:762.44px;font-size:12px;line-height:12px;color:#000;transform:scaleX(0.9691);transform-origin:0 0;">11. Gestione e verifica prassi e procedure</div>
<div class="t k" style="left:563.30px;top:794.44px;font-size:12px;line-height:12px;color:#000;transform:scaleX(0.9671);transform-origin:0 0;">11.1. Tabella gestione prassi e procedure</div>
<div class="t k" style="left:563.30px;top:826.44px;font-size:12px;line-height:12px;color:#000;transform:scaleX(1.0139);transform-origin:0 0;">12. Note finali</div>
<div class="t k" style="left:563.30px;top:858.44px;font-size:12px;line-height:12px;color:#000;transform:scaleX(0.9748);transform-origin:0 0;">13. Firme</div>
<div class="t" style="left:854.60px;top:242.74px;font-size:12px;line-height:12px;color:#b4b4b4;transform:scaleX(0.9667);transform-origin:0 0;">ADR: The European Agreement co</div>
<div class="t" style="left:854.60px;top:257.74px;font-size:12px;line-height:12px;color:#b4b4b4;transform:scaleX(0.9492);transform-origin:0 0;">Update: 2019</div>
<div class="t" style="left:854.60px;top:274.44px;font-size:12px;line-height:12px;color:#b4b4b4;transform:scaleX(0.9285);transform-origin:0 0;">ADR 1.8.3</div>
<div class="t" style="left:854.60px;top:722.44px;font-size:12px;line-height:12px;color:#b4b4b4;transform:scaleX(1.0810);transform-origin:0 0;">Note</div>
<div class="t" style="left:1091.80px;top:141.14px;font-size:27px;line-height:27px;color:#000;transform:scaleX(1.0115);transform-origin:0 0;">2. Dati impresa</div>
<div class="t k" style="left:1063.30px;top:183.84px;font-size:12px;line-height:12px;color:#000;transform:scaleX(0.9551);transform-origin:0 0;">Impresa</div>
<div class="t k" style="left:1084.80px;top:208.84px;font-size:12px;line-height:12px;color:#000;transform:scaleX(0.9698);transform-origin:0 0;">Nome impresa:</div>
<div class="t k" style="left:1174.30px;top:208.84px;font-size:12px;line-height:12px;color:#000;transform:scaleX(0.9887);transform-origin:0 0;">Certifico Srl - IT</div>
<div class="t k" style="left:1116.30px;top:230.84px;font-size:12px;line-height:12px;color:#000;transform:scaleX(0.9871);transform-origin:0 0;">Indirizzo:</div>
<div class="t k" style="left:1176.50px;top:235.34px;font-size:12px;line-height:12px;color:#000;transform:scaleX(0.9448);transform-origin:0 0;">Sede legale: Via A. De Curtis, 28 06135 Perugia (PG) - Italy</div>
<div class="t k" style="left:1067.30px;top:447.54px;font-size:12px;line-height:12px;color:#000;transform:scaleX(0.9737);transform-origin:0 0;">Capo dell&#x27;impresa:</div>
<div class="t k" style="left:1173.80px;top:447.54px;font-size:12px;line-height:12px;color:#000;transform:scaleX(0.9514);transform-origin:0 0;">M. Rossi</div>
<div class="t k" style="left:1064.30px;top:474.84px;font-size:12px;line-height:12px;color:#000;transform:scaleX(0.9679);transform-origin:0 0;">MTCT competente:</div>
<div class="t k" style="left:1173.80px;top:474.84px;font-size:12px;line-height:12px;color:#000;transform:scaleX(0.8882);transform-origin:0 0;">PG</div>
<div class="t k" style="left:1187.30px;top:499.84px;font-size:12px;line-height:12px;color:#000;transform:scaleX(0.9657);transform-origin:0 0;">Impresa soggetta a Security ADR 1.10.3</div>
<div class="t k" style="left:1063.30px;top:530.84px;font-size:12px;line-height:12px;color:#000;transform:scaleX(0.9710);transform-origin:0 0;">Consulente sicurezza</div>
<div class="t k" style="left:1086.60px;top:555.84px;font-size:12px;line-height:12px;color:#000;transform:scaleX(1.0322);transform-origin:0 0;">Nominativo:</div>
<div class="t k" style="left:1104.60px;top:577.84px;font-size:12px;line-height:12px;color:#000;transform:scaleX(0.9871);transform-origin:0 0;">Indirizzo:</div>
<div class="t k" style="left:1176.30px;top:764.84px;font-size:12px;line-height:12px;color:#000;transform:scaleX(0.9777);transform-origin:0 0;">Esterno all&#x27;impresa</div>
<div class="t k" style="left:1176.30px;top:792.84px;font-size:12px;line-height:12px;color:#000;transform:scaleX(1.0075);transform-origin:0 0;">Interno all&#x27;impresa</div>
<div class="t k" style="left:1114.60px;top:820.84px;font-size:12px;line-height:12px;color:#000;transform:scaleX(0.9195);transform-origin:0 0;">CFP n.:</div>
<div class="t k" style="left:1061.60px;top:847.84px;font-size:12px;line-height:12px;color:#000;transform:scaleX(0.9546);transform-origin:0 0;">CFP rilasciato da:</div>
<div class="t k" style="left:1063.30px;top:877.84px;font-size:12px;line-height:12px;color:#000;transform:scaleX(1.0134);transform-origin:0 0;">Prescrizioni documento</div>
<div class="t k" style="left:1062.30px;top:902.84px;font-size:12px;line-height:12px;color:#000;transform:scaleX(0.9805);transform-origin:0 0;">Esercizio dal/al:</div>
<div class="t k" style="left:1152.30px;top:902.84px;font-size:12px;line-height:12px;color:#000;transform:scaleX(0.9890);transform-origin:0 0;">01/01/2019</div>
<div class="t k" style="left:1532.30px;top:902.84px;font-size:12px;line-height:12px;color:#000;transform:scaleX(0.9890);transform-origin:0 0;">16/10/2019</div>
<div class="t k" style="left:1173.70px;top:929.64px;font-size:12px;line-height:12px;color:#000;transform:scaleX(0.9875);transform-origin:0 0;">Conservazione da parte della direzione dell&#x27;impresa almeno fino a:</div>
<div class="t" style="left:1661.80px;top:929.64px;font-size:12px;line-height:12px;color:#a0a0a0;transform:scaleX(0.9680);transform-origin:0 0;">(Data conservazione)</div>
<div class="t k" style="left:1329.70px;top:955.84px;font-size:12px;line-height:12px;color:#000;transform:scaleX(0.9715);transform-origin:0 0;">Consegna alla direzione dell&#x27;impresa:</div>
<div class="t" style="left:1648.30px;top:955.84px;font-size:12px;line-height:12px;color:#a0a0a0;transform:scaleX(0.9762);transform-origin:0 0;">(Data consegna direzione)</div>
<div class="t k" style="left:1246.70px;top:981.54px;font-size:12px;line-height:12px;color:#000;transform:scaleX(0.9717);transform-origin:0 0;">Per conoscenza da parte della direzione dell&#x27;impresa:</div>
<div class="t" style="left:59.30px;top:880.18px;font-size:24px;line-height:24px;color:#000;font-weight:bold;transform:scaleX(1.0296);transform-origin:0 0;">2. Dati impresa</div>
<div class="t k" style="left:59.30px;top:928.64px;font-size:12px;line-height:12px;color:#000;transform:scaleX(1.1100);transform-origin:0 0;">Compilare.</div>
<div class="t k" style="left:1634.30px;top:1021.84px;font-size:12px;line-height:12px;color:#000;transform:scaleX(0.9284);transform-origin:0 0;">ADR 2019</div>
<div class="t k" style="left:1711.30px;top:1021.84px;font-size:12px;line-height:12px;color:#000;transform:scaleX(1.0749);transform-origin:0 0;">adrfu</div>
<div class="t k" style="left:1766.30px;top:1021.84px;font-size:12px;line-height:12px;color:#000;transform:scaleX(0.9482);transform-origin:0 0;">16/10/2019 08:35:23</div>
<div class="t" style="left:1711.30px;top:29.84px;font-size:12px;line-height:12px;color:#6d6d6d;transform:scaleX(0.9813);transform-origin:0 0;">Inserisci il testo da cercare</div>
<div class="t k" style="left:1889.30px;top:62.84px;font-size:12px;line-height:12px;color:#000;transform:scaleX(0.9456);transform-origin:0 0;">-18</div>
</body></html>
